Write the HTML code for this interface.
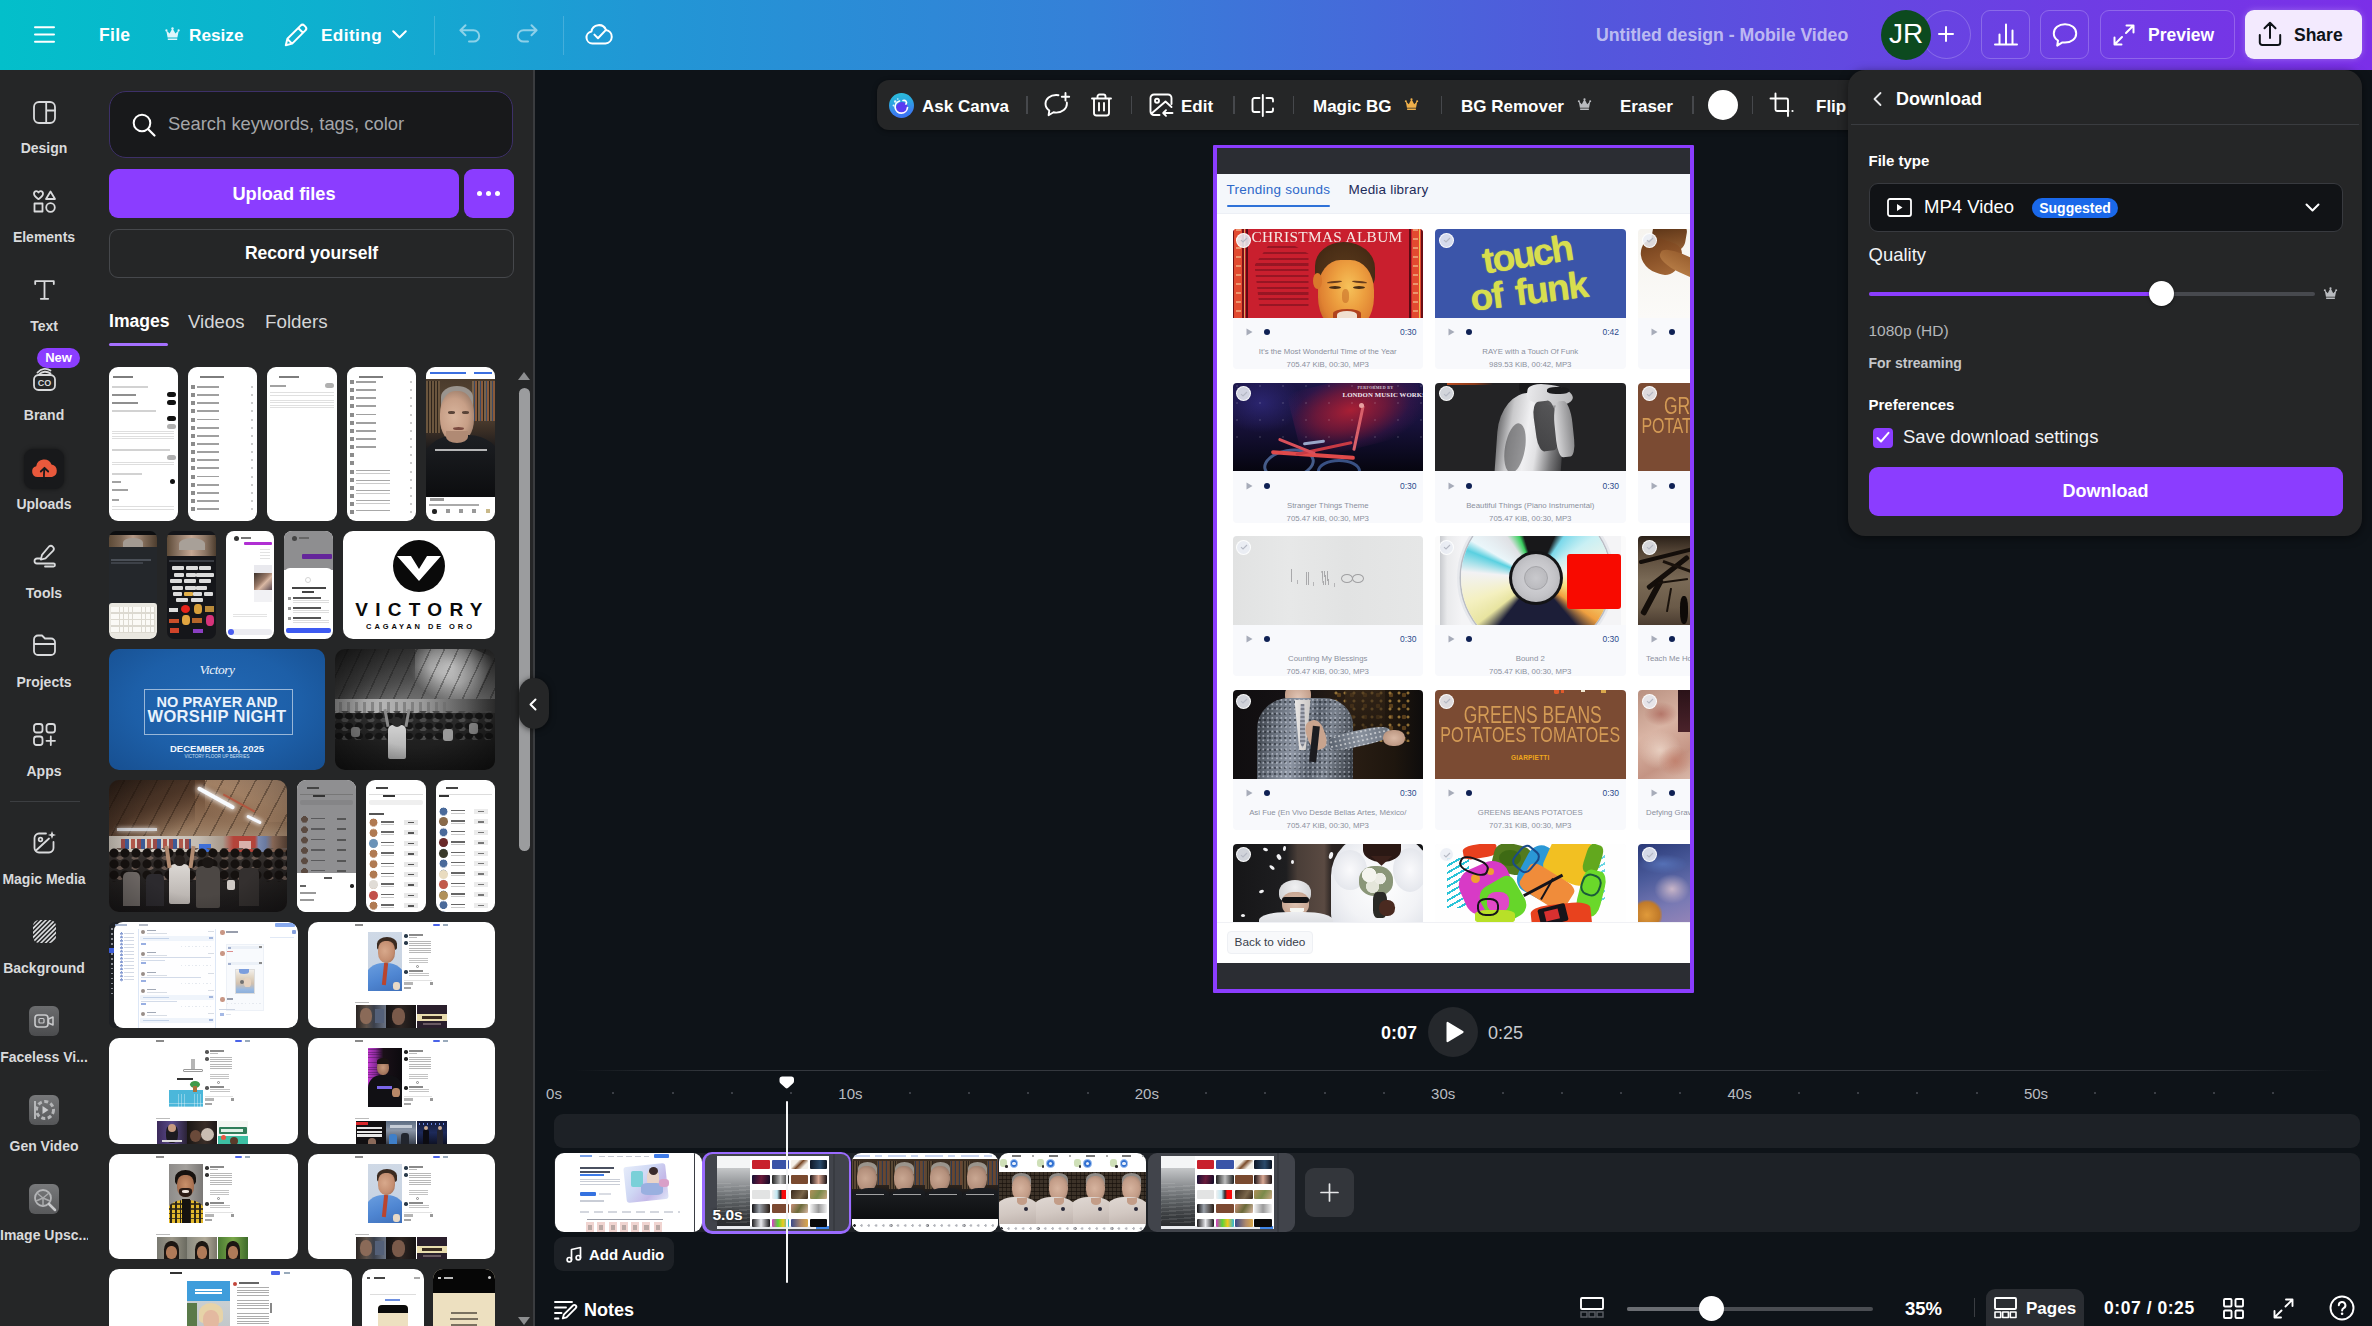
<!DOCTYPE html>
<html>
<head>
<meta charset="utf-8">
<title>Untitled design - Mobile Video</title>
<style>
*{box-sizing:border-box;margin:0;padding:0}
html,body{width:2372px;height:1326px;overflow:hidden;background:#0e1318;font-family:"Liberation Sans",sans-serif;color:#fff}
#root{position:relative;width:2372px;height:1326px;overflow:hidden;background:#0e1318}
#root div,#root svg,#root span{position:absolute}
.t{white-space:nowrap;line-height:1}
.b{font-weight:700}
#topbar{left:0;top:0;width:2372px;height:70px;background:linear-gradient(90deg,#03bfca 0%,#0eb0cf 13.500%,#2197d5 27%,#3580d8 46%,#4669da 58%,#5258dc 66.600%,#6843e2 82%,#7b2fe8 100%)}
.tbtn{top:10px;height:49px;border:1px solid rgba(255,255,255,.22);border-radius:9px}
#side{left:0;top:70px;width:88px;height:1256px;background:#252627}
.sl{left:0;width:88px;text-align:center;margin-top:1px;font-size:14px;font-weight:700;color:#d9dadc;white-space:nowrap;line-height:1}
#panel{left:88px;top:70px;width:447px;height:1256px;background:#252627;border-right:2px solid #3a3c3f}
.th{border-radius:8px;overflow:hidden;background:#fff}
svg{overflow:visible}
.st{fill:none;stroke:#fff;stroke-width:1.7;stroke-linecap:round;stroke-linejoin:round}
.sg{fill:none;stroke:#d9dadc;stroke-width:1.8;stroke-linecap:round;stroke-linejoin:round}
</style>
</head>
<body>
<div id="root">
<div id="topbar">
<!-- hamburger -->
<svg style="left:34px;top:24px" width="21" height="21" viewBox="0 0 21 21"><path class="st" style="stroke-width:2" d="M1 3.3H20M1 10.5H20M1 17.7H20"/></svg>
<div class="t b" style="left:99px;top:27px;font-size:17.500px;letter-spacing:.3px">File</div>
<!-- crown -->
<svg style="left:165px;top:27px" width="15" height="14" viewBox="0 0 15 14"><path fill="#dff6fb" d="M1.2 3.2 4.6 6.6 7.5 1.2 10.4 6.6 13.8 3.2 12.4 10.4H2.6ZM2.8 11.4H12.2V12.9H2.8Z"/><circle cx="7.5" cy="1.4" r="1.2" fill="#dff6fb"/><circle cx="1.4" cy="3.4" r="1.1" fill="#dff6fb"/><circle cx="13.6" cy="3.4" r="1.1" fill="#dff6fb"/></svg>
<div class="t b" style="left:189px;top:27px;font-size:17.200px">Resize</div>
<!-- pencil -->
<svg style="left:284px;top:23px" width="24" height="24" viewBox="0 0 24 24"><path class="st" style="stroke-width:2" d="M16.6 2.6a2.7 2.7 0 0 1 3.8 0l1 1a2.7 2.7 0 0 1 0 3.8L8.2 20.6 1.8 22.2 3.4 15.8ZM14.2 5l4.8 4.8M3.6 16.2l4.2 4.2"/></svg>
<div class="t b" style="left:321px;top:27px;font-size:17.200px;letter-spacing:.4px">Editing</div>
<svg style="left:392px;top:30px" width="15" height="9" viewBox="0 0 15 9"><path class="st" style="stroke-width:2" d="M1.2 1.2 7.5 7.5 13.8 1.2"/></svg>
<div style="left:434px;top:16px;width:1px;height:39px;background:rgba(255,255,255,.18)"></div>
<!-- undo -->
<svg style="left:459px;top:24px;opacity:.5" width="22" height="19" viewBox="0 0 22 19"><path class="st" style="stroke-width:2" d="M6.5 1.2 1.4 6.2 6.5 11.2M1.8 6.2H14.5a5.7 5.7 0 0 1 0 11.4H10"/></svg>
<svg style="left:516px;top:24px;opacity:.5" width="22" height="19" viewBox="0 0 22 19"><path class="st" style="stroke-width:2" d="M15.5 1.2 20.6 6.2 15.5 11.2M20.2 6.2H7.5a5.7 5.7 0 0 0 0 11.4H12"/></svg>
<div style="left:563px;top:16px;width:1px;height:39px;background:rgba(255,255,255,.18)"></div>
<!-- cloud check -->
<svg style="left:585px;top:22px" width="28" height="23" viewBox="0 0 28 23"><path class="st" style="stroke-width:2" d="M7.4 21.5a6 6 0 0 1-1-11.9 7.6 7.6 0 0 1 14.6-1.6 6.8 6.8 0 0 1-.5 13.5ZM9.4 12.6l3.6 3.6 8.2-8.6"/></svg>

<div class="t b" style="left:1596px;top:27px;font-size:17.700px;color:rgba(255,255,255,.62)">Untitled design - Mobile Video</div>
<!-- plus circle -->
<div style="left:1922px;top:10px;width:49px;height:49px;border-radius:50%;border:1px solid rgba(255,255,255,.22)"></div>
<svg style="left:1938px;top:26px" width="16" height="16" viewBox="0 0 16 16"><path class="st" style="stroke-width:2" d="M8 1V15M1 8H15"/></svg>
<!-- avatar -->
<div style="left:1881px;top:10px;width:50px;height:50px;border-radius:50%;background:#0c4a1f"></div>
<div class="t" style="left:1881px;top:20px;width:50px;text-align:center;font-size:28px;color:#fff">JR</div>
<!-- chart -->
<div class="tbtn" style="left:1981px;width:49px"></div>
<svg style="left:1994px;top:23px" width="24" height="23" viewBox="0 0 24 23"><path class="st" style="stroke-width:2" d="M1 21.5H23M5.5 21V11.5M12 21V1.5M18.5 21V7.5"/></svg>
<!-- comment -->
<div class="tbtn" style="left:2040px;width:49px"></div>
<svg style="left:2052px;top:22px" width="26" height="26" viewBox="0 0 26 26"><path class="st" style="stroke-width:2" d="M13 2.2c6.3 0 11.2 4 11.2 9.2S19.3 20.6 13 20.6c-.9 0-1.8-.1-2.6-.2L5.2 23.6l.8-5.1C3.400 16.800 1.800 14.300 1.800 11.400 1.800 6.200 6.700 2.200 13 2.200Z"/></svg>
<!-- preview -->
<div class="tbtn" style="left:2100px;width:135px"></div>
<svg style="left:2113px;top:24px" width="22" height="22" viewBox="0 0 22 22"><path class="st" style="stroke-width:2" d="M13.5 1.500H20.5V8.500M20.200 1.800 13 9M8.500 20.500H1.500V13.500M1.800 20.200 9 13"/></svg>
<div class="t b" style="left:2148px;top:27px;font-size:17.5px">Preview</div>
<!-- share -->
<div style="left:2245px;top:10px;width:117px;height:49px;border-radius:9px;background:#f3eafe;box-shadow:0 0 6px rgba(255,255,255,.25)"></div>
<svg style="left:2258px;top:21px" width="24" height="26" viewBox="0 0 24 26"><path class="st" style="stroke-width:2;stroke:#0e1318" d="M12 17V2M6.500 7.200 12 1.800 17.500 7.200M1.800 14V21.500a2.500 2.500 0 0 0 2.500 2.500H19.700a2.500 2.500 0 0 0 2.500-2.500V14"/></svg>
<div class="t b" style="left:2294px;top:27px;font-size:17.500px;color:#0e1318">Share</div>
</div>
<div id="side">
<!-- Design y label center 147 => rel 77 -->
<svg style="left:33px;top:31px" width="23" height="23" viewBox="0 0 23 23"><rect class="sg" x="1" y="1" width="21" height="21" rx="5"/><path class="sg" d="M13.200 1V22M13.200 9.500H22"/></svg>
<div class="sl" style="top:70px">Design</div>
<!-- Elements label 236 => rel 166 -->
<svg style="left:33px;top:120px" width="23" height="23" viewBox="0 0 23 23"><path class="sg" d="M5.500 9.200C3.500 7.800 1 6 1 3.800 1 2.200 2.200 1.200 3.400 1.200 4.400 1.200 5.100 1.800 5.500 2.500 5.900 1.800 6.600 1.200 7.600 1.200 8.800 1.200 10 2.200 10 3.800 10 6 7.500 7.800 5.500 9.200ZM17.500 1.500 22 9H13ZM1.500 13.500H9.500V21.500H1.500Z"/><circle class="sg" cx="17.500" cy="17.500" r="4.300"/></svg>
<div class="sl" style="top:159px">Elements</div>
<!-- Text label 325 => rel 255 -->
<svg style="left:34px;top:210px" width="21" height="20" viewBox="0 0 21 20"><path class="sg" d="M1.200 4V1.200H19.800V4M10.500 1.200V18.800M6.800 18.800H14.200"/></svg>
<div class="sl" style="top:248px">Text</div>
<!-- Brand label 414 => rel 344 -->
<svg style="left:33px;top:297px" width="23" height="24" viewBox="0 0 23 24"><rect class="sg" x="1" y="8" width="21" height="15" rx="4.500"/><path class="sg" d="M4.500 5.500C8.500 1 14 1 17.500 3.500M6 7.500C9 4 14 4 17.500 6.500"/><text x="11.500" y="19.300" text-anchor="middle" font-family="Liberation Sans" font-weight="700" font-size="9" fill="#d9dadc">CO</text></svg>
<div class="sl" style="top:337px">Brand</div>
<div style="left:37px;top:278px;width:43px;height:20px;border-radius:10px;background:#8b3dff"></div>
<div class="t b" style="left:37px;top:281px;width:43px;text-align:center;font-size:13px;color:#fff">New</div>
<!-- Uploads label 503 => rel 433 -->
<div style="left:24px;top:379px;width:40px;height:40px;border-radius:9px;background:#18191b;box-shadow:0 0 4px rgba(0,0,0,.5)"></div>
<svg style="left:31px;top:386px" width="27" height="26" viewBox="0 0 27 26"><path fill="#e9593c" d="M6.500 21a5.500 5.500 0 0 1-1.300-10.800 8 8 0 0 1 15.300-1.700 6.400 6.400 0 0 1 .5 12.500Z"/><path fill="none" stroke="#18191b" stroke-width="1.800" stroke-linecap="round" stroke-linejoin="round" d="M13.500 24.500C12.500 21 13 16 13.500 12.500M9.800 15.500 13.500 11.800 17.200 15.500"/></svg>
<div class="sl" style="top:426px">Uploads</div>
<!-- Tools label 592 => rel 522 -->
<svg style="left:33px;top:475px" width="23" height="23" viewBox="0 0 23 23"><path class="sg" d="M16 1.500a3 3 0 0 1 4.200 4.200L12.500 13.400 7.800 14.600 9 9.900ZM8 13.500H4a2.500 2.500 0 0 0 0 5H20.500a1.500 1.500 0 0 1 0 3H12"/></svg>
<div class="sl" style="top:515px">Tools</div>
<!-- Projects label 681 => rel 611 -->
<svg style="left:33px;top:564px" width="23" height="22" viewBox="0 0 23 22"><path class="sg" d="M1 5.500a4 4 0 0 1 4-4h4l3 3h6a4 4 0 0 1 4 4V17a4 4 0 0 1-4 4H5a4 4 0 0 1-4-4ZM1 10H22"/></svg>
<div class="sl" style="top:604px">Projects</div>
<!-- Apps label 770 => rel 700 -->
<svg style="left:33px;top:653px" width="23" height="23" viewBox="0 0 23 23"><rect class="sg" x="1" y="1" width="8.500" height="8.500" rx="2.500"/><rect class="sg" x="13.500" y="1" width="8.500" height="8.500" rx="2.500"/><rect class="sg" x="1" y="13.500" width="8.500" height="8.500" rx="2.500"/><path class="sg" d="M17.800 13.500V22M13.500 17.800H22"/></svg>
<div class="sl" style="top:693px">Apps</div>
<div style="left:10px;top:731px;width:70px;height:1px;background:#3c3e41"></div>
<!-- Magic Media label 878 => rel 808 -->
<svg style="left:33px;top:761px" width="23" height="23" viewBox="0 0 23 23"><path class="sg" d="M13 2.500H6a4.500 4.500 0 0 0-4.500 4.500V17a4.500 4.500 0 0 0 4.500 4.500H16a4.500 4.500 0 0 0 4.500-4.500V11M3 19.500 16 7.500"/><circle class="sg" cx="7.500" cy="8.500" r="1.800"/><path fill="#d9dadc" d="M19 0l1.100 2.900L23 4l-2.900 1.100L19 8l-1.100-2.900L15 4l2.900-1.100Z"/></svg>
<div class="sl" style="top:801px">Magic Media</div>
<!-- Background label 967 => rel 897 -->
<svg style="left:33px;top:850px" width="23" height="23" viewBox="0 0 23 23"><defs><clipPath id="bgc"><rect x="0" y="0" width="23" height="23" rx="6"/></clipPath></defs><g clip-path="url(#bgc)" stroke="#d9dadc" stroke-width="1.600"><path d="M-2 6 6-2M-2 10.500 10.500-2M-2 15 15-2M-2 19.500 19.500-2M-2 24 24-2M2.500 24 24 2.500M7 24 24 7M11.500 24 24 11.500M16 24 24 16M20.500 24 24 20.500"/></g></svg>
<div class="sl" style="top:890px">Background</div>
<!-- Faceless label 1056 => rel 986 -->
<div style="left:29px;top:936px;width:30px;height:30px;border-radius:6px;background:linear-gradient(180deg,#6b6c6e,#4b4c4e)"></div>
<svg style="left:34px;top:944px" width="20" height="14" viewBox="0 0 20 14"><rect x="1" y="1" width="13" height="12" rx="3" fill="none" stroke="#c9cacc" stroke-width="1.600"/><path d="M14.500 5 19 3V11L14.500 9Z" fill="none" stroke="#c9cacc" stroke-width="1.500" stroke-linejoin="round"/><rect x="5" y="4.500" width="5" height="4.500" rx="1" fill="none" stroke="#c9cacc" stroke-width="1.200"/></svg>
<div class="sl" style="top:979px">Faceless Vi...</div>
<!-- Gen Video label 1145 => rel 1075 -->
<div style="left:29px;top:1025px;width:30px;height:30px;border-radius:6px;background:linear-gradient(180deg,#77787a,#555658)"></div>
<svg style="left:31px;top:1027px" width="26" height="26" viewBox="0 0 26 26"><circle cx="14" cy="13" r="8.500" fill="none" stroke="#b5b6b8" stroke-width="3" stroke-dasharray="4 2.500"/><path d="M11.500 9 17.500 13 11.500 17Z" fill="#c9cacc"/><path d="M4 4V22" stroke="#b5b6b8" stroke-width="2"/></svg>
<div class="sl" style="top:1068px">Gen Video</div>
<!-- Image Upsc label 1234 => rel 1164 -->
<div style="left:29px;top:1114px;width:30px;height:30px;border-radius:6px;background:linear-gradient(180deg,#78797b,#58595b)"></div>
<svg style="left:31px;top:1116px" width="26" height="26" viewBox="0 0 26 26"><circle cx="12" cy="12" r="8" fill="none" stroke="#b5b6b8" stroke-width="1.800"/><path d="M12 12 6 7M12 12 18 7M12 12 12 20M12 12 5 15M12 12 19 15" stroke="#a9aaac" stroke-width="1.500"/><path d="M18 18 24 24" stroke="#c9cacc" stroke-width="2.500" stroke-linecap="round"/></svg>
<div class="sl" style="top:1157px">Image Upsc...</div>
</div>
<div id="panel">
<!-- search: abs x109..513,y91..158 => rel x21,y21 -->
<div style="left:21px;top:21px;width:404px;height:67px;border-radius:17px;background:#18191b;border:1.500px solid #3d3068"></div>
<svg style="left:44px;top:43px" width="24" height="24" viewBox="0 0 24 24"><circle class="st" style="stroke-width:2" cx="10" cy="10" r="8.300"/><path class="st" style="stroke-width:2.200" d="M16.200 16.200 22.500 22.500"/></svg>
<div class="t" style="left:80px;top:45px;font-size:18.400px;color:#a4a6a9">Search keywords, tags, color</div>
<!-- upload -->
<div style="left:21px;top:99px;width:350px;height:49px;border-radius:9px;background:#8b3dff"></div>
<div class="t b" style="left:21px;top:115px;width:350px;text-align:center;font-size:18.200px">Upload files</div>
<div style="left:376px;top:99px;width:50px;height:49px;border-radius:9px;background:#8b3dff"></div>
<div style="left:389px;top:121px;width:5px;height:5px;border-radius:50%;background:#fff;box-shadow:9px 0 0 #fff,18px 0 0 #fff"></div>
<!-- record -->
<div style="left:21px;top:159px;width:405px;height:49px;border-radius:9px;border:1px solid #46484c;background:#252627"></div>
<div class="t b" style="left:21px;top:175px;width:405px;text-align:center;font-size:17.500px">Record yourself</div>
<!-- tabs -->
<div class="t b" style="left:21px;top:243px;font-size:17.600px">Images</div>
<div class="t" style="left:100px;top:243px;font-size:18.600px;color:#d5d6d8">Videos</div>
<div class="t" style="left:177px;top:243px;font-size:18.800px;color:#d5d6d8">Folders</div>
<div style="left:21px;top:273px;width:59px;height:3px;border-radius:2px;background:#a570ff"></div>
<!-- scrollbar -->
<svg style="left:430px;top:301px" width="12" height="9" viewBox="0 0 12 9"><path d="M0 9 6 1 12 9Z" fill="#8d8e90"/></svg>
<div style="left:431px;top:318px;width:11px;height:463px;border-radius:6px;background:#9b9c9e"></div>
<svg style="left:430px;top:1247px" width="12" height="9" viewBox="0 0 12 9"><path d="M0 0 6 8 12 0Z" fill="#8d8e90"/></svg>
<!--THUMBS-->
</div>
<!-- collapse handle -->
<div style="left:519px;top:678px;width:30px;height:51px;border-radius:15px;background:#252627;box-shadow:0 1px 6px rgba(0,0,0,.6)"></div>
<svg style="left:529px;top:698px" width="8" height="13" viewBox="0 0 8 13"><path class="st" style="stroke-width:2" d="M6.500 1.500 1.500 6.500 6.500 11.500"/></svg>
<!-- ROW 1: y367..521 -->
<div class="th" style="left:109px;top:367px;width:69px;height:154px;border-radius:9px;"><div style="left:0;top:0;width:70px;height:154px;filter:blur(.35px)">
 <div style="left:4px;top:9px;width:20px;height:2px;background:#7d7d7d"></div>
 <div style="left:3px;top:19px;width:36px;height:1.500px;background:#d2d2d2"></div>
 <div style="left:3px;top:27px;width:24px;height:2px;background:#8f8f8f"></div>
 <div style="left:3px;top:35px;width:26px;height:2px;background:#8f8f8f"></div>
 <div style="left:58px;top:25px;width:9px;height:5px;border-radius:3px;background:#111"></div>
 <div style="left:58px;top:33px;width:9px;height:5px;border-radius:3px;background:#111"></div>
 <div style="left:3px;top:43px;width:44px;height:1.500px;background:#d2d2d2"></div>
 <div style="left:58px;top:49px;width:9px;height:5px;border-radius:3px;background:#111"></div>
 <div style="left:58px;top:57px;width:9px;height:5px;border-radius:3px;background:#b0b0b0"></div>
 <div style="left:3px;top:64px;width:62px;height:10px;background:repeating-linear-gradient(180deg,#dedede 0 1px,#fff 1px 2.500px)"></div>
 <div style="left:3px;top:82px;width:58px;height:1.500px;background:#d2d2d2"></div>
 <div style="left:58px;top:88px;width:9px;height:5px;border-radius:3px;background:#b0b0b0"></div>
 <div style="left:3px;top:95px;width:62px;height:4px;background:repeating-linear-gradient(180deg,#dedede 0 1px,#fff 1px 2.500px)"></div>
 <div style="left:3px;top:106px;width:30px;height:1.500px;background:#d2d2d2"></div>
 <div style="left:61px;top:112px;width:5px;height:5px;border-radius:50%;background:#111"></div>
 <div style="left:3px;top:114px;width:9px;height:1.500px;background:#a2a2a2"></div>
 <div style="left:3px;top:122px;width:16px;height:1.500px;background:#a2a2a2"></div>
 <div style="left:3px;top:132px;width:7px;height:1.500px;background:#a2a2a2"></div>
 <div style="left:3px;top:139px;width:62px;height:4px;background:repeating-linear-gradient(180deg,#dedede 0 1px,#fff 1px 2.500px)"></div>
</div></div>
<div class="th" style="left:188px;top:367px;width:69px;height:154px;border-radius:9px;"><div style="left:0;top:0;width:70px;height:154px;filter:blur(.35px)">
 <div style="left:12px;top:9px;width:24px;height:2px;background:#7d7d7d"></div>
 <div style="left:3px;top:18px;width:4px;height:128px;background:repeating-linear-gradient(180deg,#8c8c8c 0 4px,#fff 4px 8.150px)"></div>
 <div style="left:9px;top:19px;width:22px;height:128px;background:repeating-linear-gradient(180deg,#a0a0a0 0 1.800px,#fff 1.800px 8.150px)"></div>
 <div style="left:63px;top:19px;width:2px;height:128px;background:repeating-linear-gradient(180deg,#ccc 0 2px,#fff 2px 8.150px)"></div>
</div></div>
<div class="th" style="left:267px;top:367px;width:70px;height:154px;border-radius:9px;"><div style="left:0;top:0;width:70px;height:154px;filter:blur(.35px)">
 <div style="left:12px;top:9px;width:20px;height:2px;background:#7d7d7d"></div>
 <div style="left:3px;top:18px;width:16px;height:2px;background:#a2a2a2"></div>
 <div style="left:58px;top:16px;width:9px;height:5px;border-radius:3px;background:#b0b0b0"></div>
 <div style="left:3px;top:25px;width:64px;height:4px;background:repeating-linear-gradient(180deg,#e0e0e0 0 1px,#fff 1px 2.500px)"></div>
 <div style="left:3px;top:33px;width:64px;height:8px;background:repeating-linear-gradient(180deg,#e0e0e0 0 1px,#fff 1px 2.500px)"></div>
</div></div>
<div class="th" style="left:347px;top:367px;width:69px;height:154px;border-radius:9px;"><div style="left:0;top:0;width:70px;height:154px;filter:blur(.35px)">
 <div style="left:12px;top:9px;width:24px;height:2px;background:#7d7d7d"></div>
 <div style="left:3px;top:13px;width:4px;height:134px;background:repeating-linear-gradient(180deg,#8c8c8c 0 4px,#fff 4px 8.150px)"></div>
 <div style="left:9px;top:14px;width:20px;height:70px;background:repeating-linear-gradient(180deg,#a0a0a0 0 1.800px,#fff 1.800px 8.150px)"></div>
 <div style="left:9px;top:103px;width:34px;height:44px;background:repeating-linear-gradient(180deg,#a8a8a8 0 1.500px,#fff 1.500px 3.500px,#ccc 3.500px 4.500px,#fff 4.500px 10px)"></div>
 <div style="left:63px;top:14px;width:2px;height:134px;background:repeating-linear-gradient(180deg,#ccc 0 2px,#fff 2px 8.150px)"></div>
</div></div>
<div class="th" style="left:426px;top:367px;width:69px;height:154px;border-radius:9px">
 <div style="left:4px;top:5px;width:36px;height:1.500px;background:#3b6fe0"></div><div style="left:48px;top:5px;width:18px;height:1.500px;background:#3b6fe0"></div>
 <div style="left:0;top:12px;width:69px;height:116px;background:linear-gradient(180deg,#4a3b2c 0%,#5b4836 25%,#3a2e25 45%,#17181b 62%,#0e0f11 100%)"></div>
 <div style="left:0;top:14px;width:14px;height:52px;background:repeating-linear-gradient(90deg,#6b563e 0 2px,#2d241c 2px 3px)"></div>
 <div style="left:46px;top:14px;width:23px;height:40px;background:repeating-linear-gradient(90deg,#7a6249 0 2px,#3a4a66 2px 3px,#8a5a3a 3px 5px,#2d241c 5px 6px)"></div>
 <div style="left:15px;top:19px;width:32px;height:22px;border-radius:50% 50% 0 0;background:#9a948e"></div>
 <div style="left:14px;top:24px;width:34px;height:52px;border-radius:44% 44% 46% 46%;background:radial-gradient(ellipse at 42% 50%,#d9b59d 0%,#c79f87 50%,#9a7b68 82%,#6a574c 100%)"></div>
 <div style="left:22px;top:44px;width:7px;height:2.500px;border-radius:50%;background:#5a4438"></div><div style="left:36px;top:44px;width:7px;height:2.500px;border-radius:50%;background:#5a4438"></div><div style="left:27px;top:60px;width:11px;height:3px;border-radius:50%;background:#7a4a40"></div>
 <div style="left:-4px;top:68px;width:78px;height:62px;border-radius:45% 40% 0 0;background:linear-gradient(180deg,#1d1f23,#0c0d0f)"></div>
 <div style="left:20px;top:64px;width:22px;height:12px;border-radius:0 0 50% 50%;background:#b08a74"></div>
 <div style="left:9px;top:82px;width:52px;height:1.500px;background:#ddd;opacity:.8"></div>
 <div style="left:4px;top:131px;width:14px;height:3px;background:#999"></div>
 <div style="left:3px;top:137px;width:50px;height:1.500px;background:#aaa"></div>
 <div style="left:6px;top:142px;width:5px;height:5px;border-radius:2px;background:#222"></div>
 <div style="left:20px;top:142px;width:4px;height:4px;background:#999"></div><div style="left:33px;top:142px;width:4px;height:4px;background:#999"></div><div style="left:46px;top:142px;width:4px;height:4px;background:#999"></div><div style="left:60px;top:142px;width:4px;height:4px;background:#c9b98a"></div>
</div>

<!-- ROW 2: y531..639 -->
<div class="th" style="left:109px;top:531px;width:48px;height:108px;border-radius:7px;background:#24272b">
 <div style="left:0;top:0;width:48px;height:4px;background:#0d0e10"></div>
 <div style="left:0;top:4px;width:48px;height:12px;background:linear-gradient(90deg,#5d4a37 0%,#7b6654 25%,#b59a88 50%,#7b6654 75%,#4d3d2e 100%)"></div>
 <div style="left:14px;top:7px;width:20px;height:9px;border-radius:50% 50% 0 0;background:#a39a92"></div>
 <div style="left:2px;top:28px;width:40px;height:1.500px;background:#4a4f57"></div>
 <div style="left:2px;top:31px;width:32px;height:1.500px;background:#3d4148"></div>
 <div style="left:0;top:72px;width:48px;height:36px;border-radius:3px 3px 7px 7px;background:#e9e7e0"></div>
 <div style="left:2px;top:76px;width:44px;height:26px;background:repeating-linear-gradient(180deg,#fbfaf6 0 5px,#dcd9d0 5px 6.500px)"></div>
 <div style="left:2px;top:76px;width:44px;height:26px;background:repeating-linear-gradient(90deg,transparent 0 3.600px,#dcd9d0 3.600px 4.400px)"></div>
</div>
<div class="th" style="left:167px;top:531px;width:49px;height:108px;border-radius:7px;background:#15161a">
 <div style="left:0;top:4px;width:49px;height:21px;background:linear-gradient(90deg,#5d4a37 0%,#8b7564 22%,#c5a793 50%,#8b7564 78%,#4d3d2e 100%)"></div>
 <div style="left:12px;top:7px;width:26px;height:12px;border-radius:50% 50% 0 0;background:#a8a098"></div>
 <div style="left:2px;top:29px;width:45px;height:2px;background:#3a3d44"></div>
 <div style="left:5px;top:35px;width:12px;height:4px;border-radius:1px;background:#dcdcdc;box-shadow:14px 0 0 #dcdcdc,27px 0 0 #dcdcdc"></div>
 <div style="left:7px;top:41.500px;width:10px;height:4px;border-radius:1px;background:#dcdcdc;box-shadow:12px 0 0 #dcdcdc,22px 0 0 #dcdcdc,30px 0 0 #dcdcdc"></div>
 <div style="left:3px;top:48px;width:12px;height:4px;border-radius:1px;background:#dcdcdc;box-shadow:14px 0 0 #dcdcdc,29px 0 0 #dcdcdc"></div>
 <div style="left:5px;top:54.500px;width:11px;height:4px;border-radius:1px;background:#dcdcdc;box-shadow:13px 0 0 #dcdcdc,24px 0 0 #dcdcdc"></div>
 <div style="left:6px;top:61px;width:9px;height:4px;border-radius:1px;background:#dcdcdc;box-shadow:11px 0 0 #e2b04a,20px 0 0 #dcdcdc,31px 0 0 #dcdcdc"></div>
 <div style="left:9px;top:67px;width:12px;height:4px;border-radius:1px;background:#dcdcdc;box-shadow:15px 0 0 #dcdcdc"></div>
 <div style="left:2px;top:77px;width:9px;height:4px;background:#ddd"></div>
 <div style="left:14px;top:74px;width:9px;height:8px;border-radius:50%;background:#e5231b"></div>
 <div style="left:27px;top:73px;width:8px;height:10px;border-radius:40%;background:#d8a03a"></div>
 <div style="left:38px;top:75px;width:9px;height:6px;background:#b98a3a"></div>
 <div style="left:2px;top:88px;width:10px;height:4px;background:#c94f2a"></div>
 <div style="left:15px;top:84px;width:8px;height:10px;border-radius:40%;background:#e0a440"></div>
 <div style="left:25px;top:87px;width:10px;height:5px;background:#b5652a"></div>
 <div style="left:39px;top:84px;width:8px;height:11px;border-radius:40%;background:#d6337a"></div>
 <div style="left:3px;top:97px;width:9px;height:5px;background:#d0442a"></div>
 <div style="left:26px;top:98px;width:10px;height:4px;background:#8b3fc2"></div>
</div>
<div class="th" style="left:226px;top:531px;width:48px;height:108px;border-radius:8px">
 <div style="left:8px;top:5px;width:5px;height:5px;border-radius:50%;background:#333"></div><div style="left:15px;top:6px;width:10px;height:2px;background:#777"></div>
 <div style="left:18px;top:11px;width:28px;height:3px;border-radius:1px;background:#b02fd3"></div>
 <div style="left:34px;top:18px;width:10px;height:10px;background:repeating-linear-gradient(180deg,#e2e2e2 0 1px,#fff 1px 3px)"></div>
 <div style="left:28px;top:34px;width:18px;height:10px;background:#e9e9ee"></div>
 <div style="left:28px;top:42px;width:18px;height:17px;background:linear-gradient(135deg,#3a302a 0%,#9a7a68 45%,#d9b8a3 60%,#5a4a52 100%)"></div>
 <div style="left:28px;top:59px;width:18px;height:12px;background:#f1f1f4"></div>
 <div style="left:7px;top:83px;width:34px;height:4px;background:repeating-linear-gradient(180deg,#e4e4e4 0 1px,#fff 1px 2px)"></div>
 <div style="left:2px;top:98px;width:44px;height:6px;border-radius:3px;background:#ececf1"></div>
 <div style="left:2px;top:98px;width:6px;height:6px;border-radius:50%;background:#4a5df0"></div>
</div>
<div class="th" style="left:284px;top:531px;width:49px;height:108px;border-radius:8px">
 <div style="left:0;top:0;width:49px;height:39px;background:#8e8e90"></div>
 <div style="left:8px;top:5px;width:5px;height:5px;border-radius:50%;background:#444"></div><div style="left:15px;top:6px;width:10px;height:2px;background:#666"></div>
 <div style="left:18px;top:23px;width:30px;height:4.500px;border-radius:1px;background:#64259a"></div>
 <div style="left:0;top:37px;width:49px;height:10px;border-radius:6px 6px 0 0;background:#fff"></div>
 <div style="left:21px;top:46px;width:6px;height:6px;border-radius:50%;border:1px solid #d5d5d5"></div>
 <div style="left:8px;top:56px;width:34px;height:2px;background:#444"></div><div style="left:18px;top:60px;width:12px;height:2px;background:#444"></div>
 <div style="left:4px;top:66px;width:3px;height:3px;background:#999;box-shadow:0 10px 0 #999,0 20px 0 #999"></div>
 <div style="left:9px;top:66px;width:28px;height:1.500px;background:#555;box-shadow:0 10px 0 #555,0 20px 0 #555"></div>
 <div style="left:9px;top:69px;width:36px;height:4px;background:repeating-linear-gradient(180deg,#ddd 0 1px,#fff 1px 2px)"></div>
 <div style="left:9px;top:79px;width:36px;height:4px;background:repeating-linear-gradient(180deg,#ddd 0 1px,#fff 1px 2px)"></div>
 <div style="left:9px;top:89px;width:36px;height:4px;background:repeating-linear-gradient(180deg,#ddd 0 1px,#fff 1px 2px)"></div>
 <div style="left:2px;top:97px;width:45px;height:5px;border-radius:2px;background:#3d5af1"></div>
</div>
<div class="th" style="left:343px;top:531px;width:152px;height:108px;border-radius:10px">
 <div style="left:50px;top:9px;width:52px;height:52px;border-radius:50%;background:#0a0a0a"></div>
 <svg style="left:54px;top:25px" width="44" height="26" viewBox="0 0 44 26"><path d="M0 0H14L22 13 30 0H44L22 25Z" fill="#fff"/></svg>
 <div class="t b" style="left:0;top:69px;width:152px;text-align:center;font-size:19px;letter-spacing:7.300px;color:#0a0a0a;text-indent:7px">VICTORY</div>
 <div class="t b" style="left:0;top:92px;width:152px;text-align:center;font-size:7.500px;letter-spacing:2.900px;color:#0a0a0a;text-indent:3px">CAGAYAN DE ORO</div>
</div>
<!-- ROW 3: y649..770 -->
<div class="th" style="left:109px;top:649px;width:216px;height:121px;border-radius:10px;background:radial-gradient(ellipse at 50% 45%,#2268b4 0%,#1d5fa8 55%,#174f90 100%)">
 <div class="t" style="left:0;top:14px;width:216px;text-align:center;font-family:'Liberation Serif',serif;font-style:italic;font-size:13.500px;color:#eaf2fb;letter-spacing:-.5px">Victory</div>
 <div style="left:35px;top:40px;width:149px;height:46px;border:1px solid rgba(255,255,255,.55)"></div>
 <div class="t b" style="left:0;top:46px;width:216px;text-align:center;font-size:14.500px;letter-spacing:.1px;color:#e9f2fc">NO PRAYER AND</div>
 <div class="t b" style="left:0;top:59px;width:216px;text-align:center;font-size:16.500px;letter-spacing:.35px;color:#e9f2fc">WORSHIP NIGHT</div>
 <div class="t b" style="left:0;top:95px;width:216px;text-align:center;font-size:9.500px;color:#f2f7fd">DECEMBER 16, 2025</div>
 <div class="t" style="left:0;top:106px;width:216px;text-align:center;font-size:4.500px;color:#cfe0f3">VICTORY FLOOR UP BERRIES</div>
</div>
<div class="th" style="left:335px;top:649px;width:160px;height:121px;border-radius:10px;background:#2a2a2a">
 <div style="left:0;top:0;width:160px;height:121px;filter:blur(.7px)">
 <div style="left:0;top:0;width:160px;height:70px;background:linear-gradient(180deg,#3c3c3c 0%,#565656 40%,#6e6e6e 75%,#8a8a8a 100%)"></div>
 <div style="left:70px;top:-10px;width:80px;height:60px;background:radial-gradient(ellipse at 55% 40%,#d4d4d4 0%,#a8a8a8 35%,rgba(120,120,120,0) 72%);transform:rotate(24deg)"></div>
 <div style="left:0;top:0;width:80px;height:56px;background:linear-gradient(150deg,#242424 0%,#3a3a3a 45%,rgba(80,80,80,0) 85%)"></div>
 <div style="left:0;top:0;width:160px;height:60px;background:repeating-linear-gradient(115deg,transparent 0 11px,rgba(20,20,20,.35) 11px 12.500px)"></div>
 <div style="left:0;top:50px;width:160px;height:18px;background:linear-gradient(90deg,#8e8e8e 0%,#b4b4b4 30%,#9a9a9a 55%,#5e5e5e 80%,#3a3a3a 100%)"></div>
 <div style="left:4px;top:53px;width:110px;height:11px;background:repeating-linear-gradient(90deg,#6a6a6a 0 3px,transparent 3px 8px);opacity:.6"></div>
 <div style="left:0;top:64px;width:160px;height:57px;background:linear-gradient(180deg,#2e2e2e 0%,#222 40%,#191919 100%)"></div>
 <div style="left:0;top:62px;width:160px;height:30px;background:radial-gradient(ellipse at 4px 5px,#151515 0 3.500px,transparent 4.500px) 0 0/10px 10px,radial-gradient(ellipse at 5px 4px,#4a4a4a 0 3px,transparent 4px) 5px 5px/13px 9px"></div>
 <div style="left:53px;top:76px;width:18px;height:34px;border-radius:5px 5px 2px 2px;background:linear-gradient(180deg,#d2d2d2,#a8a8a8)"></div>
 <div style="left:57px;top:68px;width:10px;height:10px;border-radius:50%;background:#2c2c2c"></div>
 <div style="left:50px;top:60px;width:3px;height:18px;background:#8a8a8a;transform:rotate(-10deg)"></div><div style="left:71px;top:60px;width:3px;height:18px;background:#8a8a8a;transform:rotate(10deg)"></div>
 <div style="left:108px;top:80px;width:10px;height:12px;border-radius:3px;background:#9a9a9a"></div><div style="left:16px;top:78px;width:9px;height:10px;border-radius:3px;background:#7a7a7a"></div><div style="left:134px;top:74px;width:9px;height:11px;border-radius:3px;background:#8a8a8a"></div>
 <div style="left:0;top:0;width:160px;height:121px;background:radial-gradient(ellipse at 50% 48%,rgba(0,0,0,0) 45%,rgba(0,0,0,.55) 100%)"></div>
 </div>
</div>

<!-- ROW 4: y780..912 -->
<div class="th" style="left:109px;top:780px;width:178px;height:132px;border-radius:10px;background:#2a2624">
 <div style="left:0;top:0;width:178px;height:132px;filter:blur(.7px)">
 <div style="left:0;top:0;width:178px;height:64px;background:linear-gradient(180deg,#5a3e2c 0%,#7a5a42 35%,#93745a 70%,#a89078 100%)"></div>
 <div style="left:0;top:0;width:86px;height:60px;background:linear-gradient(150deg,#2e2018 0%,#4a3426 45%,rgba(110,85,65,0) 85%)"></div>
 <div style="left:96px;top:-4px;width:90px;height:46px;background:linear-gradient(200deg,#b8957a 0%,#a07f63 50%,rgba(150,120,95,0) 90%)"></div>
 <div style="left:0;top:0;width:178px;height:58px;background:repeating-linear-gradient(118deg,transparent 0 13px,rgba(30,18,10,.35) 13px 14.500px)"></div>
 <div style="left:86px;top:16px;width:42px;height:4px;border-radius:2px;background:#f8fbff;transform:rotate(29deg);box-shadow:0 0 5px 1px rgba(255,255,255,.85)"></div>
 <div style="left:137px;top:38px;width:16px;height:3px;border-radius:2px;background:#f4f8ff;transform:rotate(27deg);box-shadow:0 0 4px 1px rgba(255,255,255,.8)"></div>
 <div style="left:112px;top:22px;width:36px;height:2px;background:#b9503a;transform:rotate(29deg);opacity:.8"></div>
 <div style="left:8px;top:48px;width:40px;height:3px;background:#e8eef6;box-shadow:0 0 4px #fff;opacity:.8"></div>
 <div style="left:0;top:56px;width:178px;height:18px;background:linear-gradient(90deg,#bdb6ac 0%,#d2ccc4 25%,#c4bcb2 50%,#a89a8c 64%,#b4443a 70%,#b4443a 82%,#7a8ab0 84%,#6a7aa0 88%,#8a6a58 92%,#5a4436 100%)"></div>
 <div style="left:12px;top:59px;width:70px;height:10px;background:repeating-linear-gradient(90deg,#9a4a48 0 4px,#3d5a96 4px 8px,#d8d2c8 8px 10px,#b0584a 10px 14px,#d8d2c8 14px 16px)"></div>
 <div style="left:90px;top:64px;width:12px;height:8px;background:#3f6fd6"></div><div style="left:130px;top:61px;width:12px;height:8px;background:#e8e0dc;opacity:.7"></div>
 <div style="left:0;top:72px;width:178px;height:60px;background:linear-gradient(180deg,#3a3431 0%,#262322 35%,#1a1819 100%)"></div>
 <div style="left:0;top:68px;width:178px;height:34px;background:radial-gradient(ellipse at 5px 5px,#15110f 0 4px,transparent 5px) 0 0/11px 11px,radial-gradient(ellipse at 5px 5px,#6a5a52 0 3px,transparent 4px) 6px 5px/15px 10px"></div>
 <div style="left:60px;top:84px;width:21px;height:40px;border-radius:6px 6px 2px 2px;background:linear-gradient(180deg,#dcd8d4,#b4aeaa)"></div>
 <div style="left:65px;top:75px;width:11px;height:11px;border-radius:50%;background:#241e1b"></div>
 <div style="left:57px;top:66px;width:3.500px;height:22px;background:#b08a70;transform:rotate(-8deg)"></div><div style="left:81px;top:66px;width:3.500px;height:22px;background:#b08a70;transform:rotate(8deg)"></div>
 <div style="left:87px;top:86px;width:24px;height:42px;border-radius:6px 6px 2px 2px;background:#4c4744"></div><div style="left:93px;top:77px;width:12px;height:11px;border-radius:50%;background:#1a1614"></div>
 <div style="left:14px;top:92px;width:17px;height:34px;border-radius:5px 5px 0 0;background:#6f6966"></div><div style="left:37px;top:94px;width:18px;height:32px;border-radius:5px 5px 0 0;background:#2c2a2e"></div>
 <div style="left:118px;top:100px;width:8px;height:10px;border-radius:2px;background:#cfcac6"></div><div style="left:130px;top:88px;width:20px;height:38px;border-radius:5px 5px 0 0;background:#34302f"></div>
 <div style="left:0;top:0;width:178px;height:132px;background:radial-gradient(ellipse at 50% 45%,rgba(0,0,0,0) 55%,rgba(0,0,0,.35) 100%)"></div>
 </div>
</div>
<div class="th" style="left:297px;top:780px;width:59px;height:132px;border-radius:9px">
 <div style="left:0;top:0;width:59px;height:93px;background:#8f8f91"></div>
 <div style="left:10px;top:7px;width:12px;height:2px;background:#444"></div>
 <div style="left:3px;top:14px;width:53px;height:1px;background:#777"></div><div style="left:16px;top:15px;width:12px;height:1.500px;background:#333"></div>
 <div style="left:3px;top:20px;width:53px;height:5px;border-radius:2px;background:#858587"></div>
 <div style="left:4px;top:36px;width:7px;height:66px;background:radial-gradient(circle at 3.500px 3.500px,#5a4a40 0 3.200px,transparent 3.500px) 0 0/7px 10.400px"></div>
 <div style="left:14px;top:38px;width:14px;height:62px;background:repeating-linear-gradient(180deg,#5a5a5c 0 1.500px,transparent 1.500px 10.400px)"></div>
 <div style="left:40px;top:38px;width:9px;height:62px;background:repeating-linear-gradient(180deg,#555 0 2px,transparent 2px 10.400px)"></div>
 <div style="left:0;top:93px;width:59px;height:39px;border-radius:5px 5px 0 0;background:#fff"></div>
 <div style="left:27px;top:97px;width:8px;height:1.500px;background:#555"></div>
 <div style="left:3px;top:105px;width:6px;height:1.500px;background:#666"></div><div style="left:53px;top:104px;width:3.500px;height:3.500px;border-radius:50%;background:#222"></div>
 <div style="left:3px;top:112px;width:16px;height:1.500px;background:#999"></div><div style="left:3px;top:119px;width:14px;height:1.500px;background:#999"></div>
</div>
<div class="th" style="left:366px;top:780px;width:60px;height:132px;border-radius:9px">
 <div style="left:10px;top:7px;width:12px;height:2px;background:#444"></div>
 <div style="left:3px;top:14px;width:54px;height:1px;background:#ddd"></div><div style="left:17px;top:15px;width:12px;height:1.500px;background:#333"></div>
 <div style="left:3px;top:20px;width:54px;height:5px;border-radius:2px;background:#efefef"></div>
 <div style="left:3px;top:33px;width:15px;height:1.500px;background:#555"></div>
 <div style="left:3px;top:38px;width:9px;height:94px;background:radial-gradient(circle at 4.500px 4.500px,#b07a52 0 3.800px,transparent 4.200px) 0 0/9px 10.400px"></div>
 <div style="left:3px;top:59px;width:9px;height:9px;border-radius:50%;background:#6a93b8"></div><div style="left:3px;top:100px;width:9px;height:9px;border-radius:50%;background:#e0dcd6"></div><div style="left:3px;top:111px;width:9px;height:9px;border-radius:50%;background:#c2504a"></div>
 <div style="left:15px;top:41px;width:13px;height:90px;background:repeating-linear-gradient(180deg,#666 0 1.500px,transparent 1.500px 3px,#ccc 3px 4px,transparent 4px 10.400px)"></div>
 <div style="left:38px;top:40px;width:14px;height:90px;background:repeating-linear-gradient(180deg,#e9e9e9 0 5px,transparent 5px 10.400px)"></div>
 <div style="left:42px;top:42px;width:6px;height:90px;background:repeating-linear-gradient(180deg,#555 0 1.500px,transparent 1.500px 10.400px)"></div>
</div>
<div class="th" style="left:436px;top:780px;width:59px;height:132px;border-radius:9px">
 <div style="left:10px;top:7px;width:12px;height:2px;background:#444"></div>
 <div style="left:3px;top:14px;width:53px;height:1px;background:#ddd"></div><div style="left:3px;top:15px;width:10px;height:1.500px;background:#333"></div>
 <div style="left:3px;top:27px;width:9px;height:105px;background:radial-gradient(circle at 4.500px 4.500px,#4a6a9a 0 3.800px,transparent 4.200px) 0 0/9px 10.400px"></div>
 <div style="left:3px;top:37px;width:9px;height:9px;border-radius:50%;background:#8a6a4a"></div><div style="left:3px;top:58px;width:9px;height:9px;border-radius:50%;background:#6a2a2a"></div><div style="left:3px;top:69px;width:9px;height:9px;border-radius:50%;background:#3a3a2a"></div><div style="left:3px;top:90px;width:9px;height:9px;border-radius:50%;background:#e9dcc0"></div><div style="left:3px;top:100px;width:9px;height:9px;border-radius:50%;background:#c25a4a"></div><div style="left:3px;top:111px;width:9px;height:9px;border-radius:50%;background:#b0905a"></div>
 <div style="left:15px;top:30px;width:14px;height:100px;background:repeating-linear-gradient(180deg,#666 0 1.500px,transparent 1.500px 3px,#ccc 3px 4px,transparent 4px 10.400px)"></div>
 <div style="left:38px;top:29px;width:14px;height:100px;background:repeating-linear-gradient(180deg,#ececec 0 5px,transparent 5px 10.400px)"></div>
 <div style="left:42px;top:31px;width:6px;height:100px;background:repeating-linear-gradient(180deg,#777 0 1.500px,transparent 1.500px 10.400px)"></div>
</div>
<!-- ROW 5 -->
<div class="th" style="left:109px;top:922px;width:189px;height:106px;border-radius:6px 10px 10px 6px;background:#1d1f23"><div style="left:4.500px;top:0;width:184.500px;height:106px;border-radius:9px;background:#fff"></div><div style="left:1.500px;top:6px;width:2px;height:70px;background:repeating-linear-gradient(180deg,#8a8d94 0 1.500px,transparent 1.500px 5px)"></div><div style="left:0;top:26px;width:4.500px;height:5px;background:#3b5bd6"></div><div style="left:6px;top:2px;width:12px;height:1.500px;background:#7a8fb5"></div><div style="left:30px;top:2px;width:9px;height:1.500px;background:#8a93a5"></div><div style="left:166px;top:1px;width:20px;height:4px;border-radius:1px;background:#3f77e6"></div><div style="left:11px;top:10px;width:3px;height:50px;background:radial-gradient(circle at 1.500px 1.500px,#3d5fb8 0 1.200px,transparent 1.400px) 0 0/3px 3.550px"></div><div style="left:15px;top:10.500px;width:10px;height:49px;background:repeating-linear-gradient(180deg,#b8c2d6 0 1px,transparent 1px 3.550px)"></div><div style="left:29px;top:7px;width:78px;height:99px;border-left:1px solid #c9d9f0;border-right:1px solid #c9d9f0;background:#fdfeff"></div><div style="left:32px;top:8px;width:4px;height:4px;border-radius:50%;background:#5a4a42"></div><div style="left:38px;top:8px;width:9px;height:1.300px;background:#6a7489"></div><div style="left:38px;top:10.5px;width:20px;height:1px;background:#c1c8d6"></div><div style="left:99px;top:9px;width:6px;height:1px;background:#c1c8d6"></div><div style="left:32px;top:30px;width:4px;height:4px;border-radius:50%;background:#5a4a42"></div><div style="left:38px;top:30px;width:9px;height:1.300px;background:#6a7489"></div><div style="left:38px;top:32.5px;width:20px;height:1px;background:#c1c8d6"></div><div style="left:99px;top:31px;width:6px;height:1px;background:#c1c8d6"></div><div style="left:32px;top:50px;width:4px;height:4px;border-radius:50%;background:#5a4a42"></div><div style="left:38px;top:50px;width:9px;height:1.300px;background:#6a7489"></div><div style="left:38px;top:52.5px;width:20px;height:1px;background:#c1c8d6"></div><div style="left:99px;top:51px;width:6px;height:1px;background:#c1c8d6"></div><div style="left:32px;top:67px;width:4px;height:4px;border-radius:50%;background:#5a4a42"></div><div style="left:38px;top:67px;width:9px;height:1.300px;background:#6a7489"></div><div style="left:38px;top:69.5px;width:20px;height:1px;background:#c1c8d6"></div><div style="left:99px;top:68px;width:6px;height:1px;background:#c1c8d6"></div><div style="left:32px;top:90px;width:4px;height:4px;border-radius:50%;background:#5a4a42"></div><div style="left:38px;top:90px;width:9px;height:1.300px;background:#6a7489"></div><div style="left:38px;top:92.5px;width:20px;height:1px;background:#c1c8d6"></div><div style="left:99px;top:91px;width:6px;height:1px;background:#c1c8d6"></div><div style="left:31px;top:14px;width:74px;height:4.500px;border-radius:1px;background:#e6eef9"></div><div style="left:34px;top:15.5px;width:26px;height:1.200px;background:#9fb6da"></div><div style="left:100px;top:15px;width:4px;height:2px;background:#6d8cc9"></div><div style="left:31px;top:73px;width:74px;height:4.500px;border-radius:1px;background:#e6eef9"></div><div style="left:34px;top:74.5px;width:26px;height:1.200px;background:#9fb6da"></div><div style="left:100px;top:74px;width:4px;height:2px;background:#6d8cc9"></div><div style="left:31px;top:96px;width:74px;height:4.500px;border-radius:1px;background:#e6eef9"></div><div style="left:34px;top:97.5px;width:26px;height:1.200px;background:#9fb6da"></div><div style="left:100px;top:97px;width:4px;height:2px;background:#6d8cc9"></div><div style="left:32px;top:21px;width:5px;height:1.500px;background:#5b7fd0"></div><div style="left:72px;top:24px;width:32px;height:1px;background:repeating-linear-gradient(90deg,#d5dbe6 0 1.500px,transparent 1.500px 3.600px)"></div><div style="left:32px;top:40px;width:5px;height:1.500px;background:#5b7fd0"></div><div style="left:72px;top:43px;width:32px;height:1px;background:repeating-linear-gradient(90deg,#d5dbe6 0 1.500px,transparent 1.500px 3.600px)"></div><div style="left:32px;top:58px;width:5px;height:1.500px;background:#5b7fd0"></div><div style="left:72px;top:61px;width:32px;height:1px;background:repeating-linear-gradient(90deg,#d5dbe6 0 1.500px,transparent 1.500px 3.600px)"></div><div style="left:32px;top:81px;width:5px;height:1.500px;background:#5b7fd0"></div><div style="left:72px;top:84px;width:32px;height:1px;background:repeating-linear-gradient(90deg,#d5dbe6 0 1.500px,transparent 1.500px 3.600px)"></div><div style="left:32px;top:35px;width:70px;height:1.100px;background:#b9c6dc"></div><div style="left:32px;top:37.500px;width:24px;height:1.100px;background:#b9c6dc"></div><div style="left:32px;top:55px;width:60px;height:1.100px;background:#b9c6dc"></div><div style="left:32px;top:78.500px;width:36px;height:1.100px;background:#b9c6dc"></div><div style="left:111px;top:8px;width:4.500px;height:4.500px;border-radius:50%;background:#a8573a"></div><div style="left:117px;top:9px;width:12px;height:1.500px;background:#59637a"></div><div style="left:183px;top:8px;width:3.500px;height:3.500px;border-radius:1px;background:#3b67c9"></div><div style="left:161px;top:14.500px;width:24px;height:1px;background:#cfdcf0"></div><div style="left:117px;top:22px;width:38px;height:67px;background:#f4f7fc;border:.6px solid #e3e9f3"></div><div style="left:119px;top:24px;width:34px;height:2.500px;background:#dfe7f3"></div><div style="left:119px;top:24.500px;width:3px;height:2px;background:#6a7fae"></div><div style="left:150px;top:24px;width:3px;height:2px;background:#444"></div><div style="left:111px;top:29px;width:4.500px;height:4.500px;border-radius:50%;background:#a8573a"></div><div style="left:118px;top:28.500px;width:6px;height:1.500px;background:#c94a4a"></div><div style="left:119px;top:40px;width:34px;height:2.500px;background:#dfe7f3"></div><div style="left:119px;top:40.500px;width:3px;height:2px;background:#6a7fae"></div><div style="left:150px;top:40px;width:3px;height:2px;background:#444"></div><div style="left:126px;top:47px;width:20px;height:25px;background:linear-gradient(180deg,#e9e4dc 0%,#cdb89a 35%,#b59a7e 60%,#5b8fd0 85%,#4a7fc4 100%);border:.5px solid #c9c9c9"></div><div style="left:130px;top:47px;width:10px;height:5px;background:#2d63c8;border-radius:0 0 50% 50%"></div><div style="left:131px;top:58px;width:4px;height:4px;border-radius:50%;background:#1a1a1a"></div><div style="left:135px;top:56px;width:7px;height:9px;border-radius:40%;background:#d9b99a"></div><div style="left:111px;top:75px;width:4.500px;height:4.500px;border-radius:50%;background:#a8573a"></div><div style="left:118px;top:76px;width:6px;height:1.500px;background:#59637a"></div><div style="left:118px;top:80.500px;width:36px;height:1px;background:repeating-linear-gradient(90deg,#d5dbe6 0 1.500px,transparent 1.500px 3.600px)"></div><div style="left:110px;top:87px;width:16px;height:1.200px;background:#aebbd2"></div><div style="left:111px;top:91px;width:4px;height:2.500px;background:#6f8fd6"></div><div style="left:117px;top:92px;width:5px;height:1px;background:#cfd5e1"></div><div style="left:4.500px;top:0;width:184.500px;height:106px;border-radius:9px;background:rgba(255,255,255,.38)"></div></div>
<div class="th" style="left:308px;top:922px;width:187px;height:106px;border-radius:10px"><div style="left:46.8px;top:2px;width:8px;height:1.500px;background:#8a8a8a"></div><div style="left:124.7px;top:1.500px;width:7px;height:2.500px;border-radius:1px;background:#4a63e8"></div><div style="left:134.6px;top:2px;width:5px;height:1.500px;background:#9ab"></div><div style="left:60px;top:10px;width:33.500px;height:59px;overflow:hidden;background:linear-gradient(180deg,#cfd9e6 0%,#c4d0e0 100%)"><div style="left:9px;top:5px;width:20px;height:13px;border-radius:50% 50% 20% 20%;background:#3a2a20"></div><div style="left:10px;top:9px;width:17px;height:22px;border-radius:40% 40% 45% 45%;background:radial-gradient(ellipse at 40% 45%,#d8a98c 0%,#c38d70 60%,#8a5c48 100%)"></div><div style="left:-2px;top:31px;width:38px;height:30px;border-radius:45% 45% 0 0;background:linear-gradient(160deg,#6b9fe0 0%,#4f86d2 50%,#3c6cb6 100%)"></div><div style="left:15px;top:31px;width:4px;height:22px;background:#b9452f;transform:rotate(6deg)"></div><div style="left:25px;top:50px;width:7px;height:8px;border-radius:40%;background:#e8d9c6"></div></div><div style="left:96px;top:12px;width:3.500px;height:3.500px;border-radius:50%;background:#2a3a4a;box-shadow:0 7px 0 #2a3a4a,0 36px 0 #2a3a4a"></div><div style="left:101px;top:12px;width:14px;height:1.500px;background:#8a8a8a"></div><div style="left:101px;top:15px;width:8px;height:1px;background:#bbb"></div><div style="left:101px;top:19px;width:22px;height:13px;background:repeating-linear-gradient(180deg,#b8b8b8 0 1px,#fff 1px 2.200px)"></div><div style="left:101px;top:36px;width:19px;height:5px;background:repeating-linear-gradient(180deg,#c4c4c4 0 1px,#fff 1px 2.200px)"></div><div style="left:108px;top:43px;width:3px;height:3px;border-radius:50%;border:.7px solid #888"></div><div style="left:101px;top:48px;width:14px;height:1.500px;background:#8a8a8a"></div><div style="left:101px;top:51px;width:20px;height:3px;background:repeating-linear-gradient(180deg,#c4c4c4 0 1px,#fff 1px 2px)"></div><div style="left:96px;top:58px;width:28px;height:.8px;background:#e2e2e2"></div><div style="left:96px;top:60px;width:9px;height:2.500px;background:#b5b5b5"></div><div style="left:122px;top:60px;width:2.500px;height:2.500px;background:#999"></div><div style="left:96px;top:65px;width:7px;height:1.500px;background:#a5a5a5"></div><div style="left:47px;top:80px;width:14px;height:1px;background:#bbb"></div><div style="left:47.5px;top:83px;width:30px;height:23px;overflow:hidden;background:linear-gradient(90deg,#2b2624 0%,#5b5048 35%,#3a3f4a 60%,#6b7485 100%)"><div style="left:4px;top:3px;width:12px;height:16px;border-radius:45%;background:#8a6a58"></div><div style="left:19px;top:4px;width:9px;height:14px;background:#546078"></div></div><div style="left:78.2px;top:83px;width:30px;height:23px;overflow:hidden;background:linear-gradient(90deg,#141213,#2d2522 50%,#161314)"><div style="left:6px;top:3px;width:13px;height:17px;border-radius:45%;background:#7a5a4a"></div></div><div style="left:108.9px;top:83px;width:30px;height:23px;overflow:hidden;background:#2a1f2c"><div style="left:0;top:9px;width:30px;height:7px;background:#e9dcae"></div><div style="left:5px;top:11px;width:20px;height:2.500px;background:#3a2a20"></div><div style="left:6px;top:18px;width:18px;height:1.500px;background:#6a5a62"></div></div></div>
<!-- ROW 6 -->
<div class="th" style="left:109px;top:1038px;width:189px;height:106px;border-radius:10px"><div style="left:47.2px;top:2px;width:8px;height:1.500px;background:#8a8a8a"></div><div style="left:126.1px;top:1.500px;width:7px;height:2.500px;border-radius:1px;background:#4a63e8"></div><div style="left:136.1px;top:2px;width:5px;height:1.500px;background:#9ab"></div><div style="left:60px;top:10px;width:33.500px;height:59px;overflow:hidden;background:#fff"><div style="left:22px;top:11px;width:4px;height:10px;background:#b5b5b5"></div><div style="left:14px;top:21px;width:20px;height:2.500px;border-radius:1px;border:.7px solid #999"></div><div style="left:8px;top:30px;width:16px;height:1.800px;background:#333"></div><div style="left:0;top:42px;width:33.500px;height:17px;background:#4bb7da"></div><div style="left:0;top:40.500px;width:33.500px;height:3px;background:radial-gradient(circle at 1.700px 3px,#4bb7da 0 1.700px,transparent 1.900px) 0 0/3.400px 3px"></div><div style="left:0;top:46px;width:33.500px;height:13px;background:repeating-linear-gradient(90deg,transparent 0 2.600px,rgba(255,255,255,.35) 2.600px 3.200px),repeating-linear-gradient(180deg,transparent 0 2.600px,rgba(255,255,255,.35) 2.600px 3.200px)"></div><div style="left:21px;top:33px;width:10px;height:7px;border-radius:50%;background:#3f9a4a"></div><div style="left:24px;top:38px;width:4px;height:6px;background:#a9713a"></div></div><div style="left:96px;top:12px;width:3.500px;height:3.500px;border-radius:50%;background:#555;box-shadow:0 7px 0 #555,0 36px 0 #555"></div><div style="left:101px;top:12px;width:14px;height:1.500px;background:#8a8a8a"></div><div style="left:101px;top:15px;width:8px;height:1px;background:#bbb"></div><div style="left:101px;top:19px;width:22px;height:13px;background:repeating-linear-gradient(180deg,#b8b8b8 0 1px,#fff 1px 2.200px)"></div><div style="left:101px;top:36px;width:19px;height:5px;background:repeating-linear-gradient(180deg,#c4c4c4 0 1px,#fff 1px 2.200px)"></div><div style="left:108px;top:43px;width:3px;height:3px;border-radius:50%;border:.7px solid #888"></div><div style="left:101px;top:48px;width:14px;height:1.500px;background:#8a8a8a"></div><div style="left:101px;top:51px;width:20px;height:3px;background:repeating-linear-gradient(180deg,#c4c4c4 0 1px,#fff 1px 2px)"></div><div style="left:96px;top:58px;width:28px;height:.8px;background:#e2e2e2"></div><div style="left:96px;top:60px;width:9px;height:2.500px;background:#b5b5b5"></div><div style="left:122px;top:60px;width:2.500px;height:2.500px;background:#999"></div><div style="left:96px;top:65px;width:7px;height:1.500px;background:#a5a5a5"></div><div style="left:47px;top:80px;width:14px;height:1px;background:#bbb"></div><div style="left:47.5px;top:83px;width:30px;height:23px;overflow:hidden;background:linear-gradient(90deg,#3b2a5a,#5a4a8a 50%,#2a2236)"><div style="left:9px;top:4px;width:12px;height:18px;border-radius:40%;background:#1c1a20"></div><div style="left:11px;top:3px;width:8px;height:8px;border-radius:50%;background:#c79a80"></div><div style="left:5px;top:19px;width:20px;height:2px;background:#ddd"></div></div><div style="left:78.2px;top:83px;width:30px;height:23px;overflow:hidden;background:linear-gradient(90deg,#1a1614,#3a2e28 60%,#20191a)"><div style="left:14px;top:7px;width:13px;height:13px;border-radius:50%;background:#c9bdb2"></div><div style="left:3px;top:9px;width:11px;height:12px;border-radius:50%;background:#6a4a3a"></div></div><div style="left:108.9px;top:83px;width:30px;height:23px;overflow:hidden;background:#f3f6f2"><div style="left:1px;top:6px;width:28px;height:7px;background:#2f7d5a;border-radius:1px"></div><div style="left:3px;top:8px;width:22px;height:2.500px;background:#dff0e6"></div><div style="left:0;top:15px;width:30px;height:9px;background:#3dbfa3"></div><div style="left:12px;top:16px;width:8px;height:8px;border-radius:50%;background:#5a3a2a"></div><div style="left:3px;top:14px;width:5px;height:5px;border-radius:50%;background:#e9553f"></div></div></div>
<div class="th" style="left:308px;top:1038px;width:187px;height:106px;border-radius:10px"><div style="left:46.8px;top:2px;width:8px;height:1.500px;background:#8a8a8a"></div><div style="left:124.7px;top:1.500px;width:7px;height:2.500px;border-radius:1px;background:#4a63e8"></div><div style="left:134.6px;top:2px;width:5px;height:1.500px;background:#9ab"></div><div style="left:60px;top:10px;width:33.500px;height:59px;overflow:hidden;background:linear-gradient(90deg,#c23ad0 0%,#8a2a9a 22%,#1a1018 45%,#0c0a0e 100%)"><div style="left:0;top:0;width:14px;height:30px;background:repeating-linear-gradient(180deg,rgba(255,255,255,.0) 0 1.500px,rgba(40,10,50,.35) 1.500px 2.500px)"></div><div style="left:9px;top:12px;width:12px;height:15px;border-radius:45%;background:radial-gradient(ellipse at 50% 50%,#c99a7c,#8a5f48)"></div><div style="left:9px;top:10px;width:12px;height:6px;border-radius:50% 50% 0 0;background:#1a1412"></div><div style="left:0;top:27px;width:33.500px;height:32px;border-radius:40% 40% 0 0;background:#111014"></div><div style="left:9px;top:38px;width:15px;height:2.500px;background:#7a66e8"></div><div style="left:24px;top:40px;width:8px;height:9px;border-radius:40%;background:#b88868"></div></div><div style="left:96px;top:12px;width:3.500px;height:3.500px;border-radius:50%;background:#222;box-shadow:0 7px 0 #222,0 36px 0 #222"></div><div style="left:101px;top:12px;width:14px;height:1.500px;background:#8a8a8a"></div><div style="left:101px;top:15px;width:8px;height:1px;background:#bbb"></div><div style="left:101px;top:19px;width:22px;height:13px;background:repeating-linear-gradient(180deg,#b8b8b8 0 1px,#fff 1px 2.200px)"></div><div style="left:101px;top:36px;width:19px;height:5px;background:repeating-linear-gradient(180deg,#c4c4c4 0 1px,#fff 1px 2.200px)"></div><div style="left:108px;top:43px;width:3px;height:3px;border-radius:50%;border:.7px solid #888"></div><div style="left:101px;top:48px;width:14px;height:1.500px;background:#8a8a8a"></div><div style="left:101px;top:51px;width:20px;height:3px;background:repeating-linear-gradient(180deg,#c4c4c4 0 1px,#fff 1px 2px)"></div><div style="left:96px;top:58px;width:28px;height:.8px;background:#e2e2e2"></div><div style="left:96px;top:60px;width:9px;height:2.500px;background:#b5b5b5"></div><div style="left:122px;top:60px;width:2.500px;height:2.500px;background:#999"></div><div style="left:96px;top:65px;width:7px;height:1.500px;background:#a5a5a5"></div><div style="left:47px;top:80px;width:14px;height:1px;background:#bbb"></div><div style="left:47.5px;top:83px;width:30px;height:23px;overflow:hidden;background:#121012"><div style="left:0;top:1px;width:12px;height:2.500px;background:#d8262a"></div><div style="left:1px;top:6px;width:25px;height:11px;background:repeating-linear-gradient(180deg,#e8e8e8 0 2.400px,#121012 2.400px 3.700px)"></div><div style="left:12px;top:17px;width:8px;height:7px;border-radius:50% 50% 0 0;background:#8a6a5a"></div></div><div style="left:78.2px;top:83px;width:30px;height:23px;overflow:hidden;background:linear-gradient(180deg,#5a6a80 0%,#8a95a6 40%,#3a4250 100%)"><div style="left:3px;top:13px;width:8px;height:10px;background:#3f7fc8;border-radius:3px 3px 0 0"></div><div style="left:15px;top:12px;width:8px;height:11px;background:#22262e;border-radius:3px 3px 0 0"></div><div style="left:4px;top:4px;width:22px;height:3px;background:#c5ccd6"></div></div><div style="left:108.9px;top:83px;width:30px;height:23px;overflow:hidden;background:linear-gradient(180deg,#141a3a 0%,#1d2a5a 50%,#0e1226 100%)"><div style="left:6px;top:8px;width:6px;height:15px;border-radius:3px 3px 0 0;background:#0c0c12"></div><div style="left:7px;top:5px;width:4px;height:4px;border-radius:50%;background:#c9a890"></div><div style="left:20px;top:8px;width:6px;height:15px;border-radius:3px 3px 0 0;background:#23232e"></div><div style="left:21px;top:5px;width:4px;height:4px;border-radius:50%;background:#c9a890"></div><div style="left:2px;top:2px;width:26px;height:2px;background:repeating-linear-gradient(90deg,#6a86e0 0 1.500px,transparent 1.500px 4px)"></div></div></div>
<!-- ROW 7 -->
<div class="th" style="left:109px;top:1154px;width:189px;height:105px;border-radius:10px"><div style="left:47.2px;top:2px;width:8px;height:1.500px;background:#8a8a8a"></div><div style="left:126.1px;top:1.500px;width:7px;height:2.500px;border-radius:1px;background:#4a63e8"></div><div style="left:136.1px;top:2px;width:5px;height:1.500px;background:#9ab"></div><div style="left:60px;top:10px;width:33.500px;height:59px;overflow:hidden;background:linear-gradient(90deg,#8e8c8a 0%,#a3a09c 50%,#7a7876 100%)"><div style="left:6px;top:6px;width:21px;height:16px;border-radius:50% 50% 30% 30%;background:#17120f"></div><div style="left:8px;top:11px;width:17px;height:22px;border-radius:40% 40% 45% 45%;background:radial-gradient(ellipse at 50% 45%,#c9916a 0%,#a87050 65%,#5a3a2a 100%)"></div><div style="left:10px;top:24px;width:13px;height:9px;border-radius:30% 30% 50% 50%;background:#2a1c16"></div><div style="left:13px;top:26px;width:7px;height:2.500px;border-radius:40%;background:#efe6e0"></div><div style="left:-2px;top:36px;width:38px;height:26px;border-radius:45% 45% 0 0;background:repeating-linear-gradient(90deg,#e3b92c 0 3.500px,#2a2418 3.500px 4.800px),#e3b92c"></div><div style="left:-2px;top:36px;width:38px;height:26px;border-radius:45% 45% 0 0;background:repeating-linear-gradient(180deg,transparent 0 3.500px,rgba(42,36,24,.8) 3.500px 4.800px)"></div><div style="left:13px;top:35px;width:8px;height:24px;background:#15120f"></div></div><div style="left:96px;top:12px;width:3.500px;height:3.500px;border-radius:50%;background:#333;box-shadow:0 7px 0 #333,0 36px 0 #333"></div><div style="left:101px;top:12px;width:14px;height:1.500px;background:#8a8a8a"></div><div style="left:101px;top:15px;width:8px;height:1px;background:#bbb"></div><div style="left:101px;top:19px;width:22px;height:13px;background:repeating-linear-gradient(180deg,#b8b8b8 0 1px,#fff 1px 2.200px)"></div><div style="left:101px;top:36px;width:19px;height:5px;background:repeating-linear-gradient(180deg,#c4c4c4 0 1px,#fff 1px 2.200px)"></div><div style="left:108px;top:43px;width:3px;height:3px;border-radius:50%;border:.7px solid #888"></div><div style="left:101px;top:48px;width:14px;height:1.500px;background:#8a8a8a"></div><div style="left:101px;top:51px;width:20px;height:3px;background:repeating-linear-gradient(180deg,#c4c4c4 0 1px,#fff 1px 2px)"></div><div style="left:96px;top:58px;width:28px;height:.8px;background:#e2e2e2"></div><div style="left:96px;top:60px;width:9px;height:2.500px;background:#b5b5b5"></div><div style="left:122px;top:60px;width:2.500px;height:2.500px;background:#999"></div><div style="left:96px;top:65px;width:7px;height:1.500px;background:#a5a5a5"></div><div style="left:47px;top:80px;width:14px;height:1px;background:#bbb"></div><div style="left:47.5px;top:83px;width:30px;height:22px;overflow:hidden;background:linear-gradient(90deg,#7a7a72,#9a9688 50%,#6a6a60)"><div style="left:7px;top:4px;width:15px;height:19px;border-radius:45% 45% 0 0;background:#1c1612"></div><div style="left:9px;top:9px;width:11px;height:13px;border-radius:45%;background:#b07a58"></div></div><div style="left:78.2px;top:83px;width:30px;height:22px;overflow:hidden;background:linear-gradient(90deg,#8a8a80,#b0aa98 60%,#7a766a)"><div style="left:8px;top:4px;width:14px;height:19px;border-radius:45% 45% 0 0;background:#1c1612"></div><div style="left:10px;top:9px;width:10px;height:13px;border-radius:45%;background:#b07a58"></div></div><div style="left:108.9px;top:83px;width:30px;height:22px;overflow:hidden;background:linear-gradient(90deg,#4a7a32,#7aa84a 50%,#3d6a2a)"><div style="left:8px;top:4px;width:14px;height:19px;border-radius:45% 45% 0 0;background:#1c1612"></div><div style="left:10px;top:9px;width:10px;height:13px;border-radius:45%;background:#b07a58"></div></div></div>
<div class="th" style="left:308px;top:1154px;width:187px;height:105px;border-radius:10px"><div style="left:46.8px;top:2px;width:8px;height:1.500px;background:#8a8a8a"></div><div style="left:124.7px;top:1.500px;width:7px;height:2.500px;border-radius:1px;background:#4a63e8"></div><div style="left:134.6px;top:2px;width:5px;height:1.500px;background:#9ab"></div><div style="left:60px;top:10px;width:33.500px;height:59px;overflow:hidden;background:linear-gradient(180deg,#cfd9e6 0%,#c4d0e0 100%)"><div style="left:9px;top:5px;width:20px;height:13px;border-radius:50% 50% 20% 20%;background:#3a2a20"></div><div style="left:10px;top:9px;width:17px;height:22px;border-radius:40% 40% 45% 45%;background:radial-gradient(ellipse at 40% 45%,#d8a98c 0%,#c38d70 60%,#8a5c48 100%)"></div><div style="left:-2px;top:31px;width:38px;height:30px;border-radius:45% 45% 0 0;background:linear-gradient(160deg,#6b9fe0 0%,#4f86d2 50%,#3c6cb6 100%)"></div><div style="left:15px;top:31px;width:4px;height:22px;background:#b9452f;transform:rotate(6deg)"></div><div style="left:25px;top:50px;width:7px;height:8px;border-radius:40%;background:#e8d9c6"></div></div><div style="left:96px;top:12px;width:3.500px;height:3.500px;border-radius:50%;background:#2a3a4a;box-shadow:0 7px 0 #2a3a4a,0 36px 0 #2a3a4a"></div><div style="left:101px;top:12px;width:14px;height:1.500px;background:#8a8a8a"></div><div style="left:101px;top:15px;width:8px;height:1px;background:#bbb"></div><div style="left:101px;top:19px;width:22px;height:13px;background:repeating-linear-gradient(180deg,#b8b8b8 0 1px,#fff 1px 2.200px)"></div><div style="left:101px;top:36px;width:19px;height:5px;background:repeating-linear-gradient(180deg,#c4c4c4 0 1px,#fff 1px 2.200px)"></div><div style="left:108px;top:43px;width:3px;height:3px;border-radius:50%;border:.7px solid #888"></div><div style="left:101px;top:48px;width:14px;height:1.500px;background:#8a8a8a"></div><div style="left:101px;top:51px;width:20px;height:3px;background:repeating-linear-gradient(180deg,#c4c4c4 0 1px,#fff 1px 2px)"></div><div style="left:96px;top:58px;width:28px;height:.8px;background:#e2e2e2"></div><div style="left:96px;top:60px;width:9px;height:2.500px;background:#b5b5b5"></div><div style="left:122px;top:60px;width:2.500px;height:2.500px;background:#999"></div><div style="left:96px;top:65px;width:7px;height:1.500px;background:#a5a5a5"></div><div style="left:47px;top:80px;width:14px;height:1px;background:#bbb"></div><div style="left:47.5px;top:83px;width:30px;height:22px;overflow:hidden;background:linear-gradient(90deg,#2b2624 0%,#5b5048 35%,#3a3f4a 60%,#6b7485 100%)"><div style="left:4px;top:3px;width:12px;height:16px;border-radius:45%;background:#8a6a58"></div><div style="left:19px;top:4px;width:9px;height:14px;background:#546078"></div></div><div style="left:78.2px;top:83px;width:30px;height:22px;overflow:hidden;background:linear-gradient(90deg,#141213,#2d2522 50%,#161314)"><div style="left:6px;top:3px;width:13px;height:17px;border-radius:45%;background:#7a5a4a"></div></div><div style="left:108.9px;top:83px;width:30px;height:22px;overflow:hidden;background:#2a1f2c"><div style="left:0;top:9px;width:30px;height:7px;background:#e9dcae"></div><div style="left:5px;top:11px;width:20px;height:2.500px;background:#3a2a20"></div><div style="left:6px;top:18px;width:18px;height:1.500px;background:#6a5a62"></div></div></div>
<!-- ROW 8 -->
<div class="th" style="left:109px;top:1269px;width:243px;height:70px;border-radius:10px"><div style="left:61px;top:3px;width:12px;height:2px;background:#333"></div><div style="left:162px;top:2px;width:9px;height:3.500px;border-radius:1px;background:#4a63e8"></div><div style="left:175px;top:3px;width:6px;height:1.500px;background:#9ab"></div><div style="left:78px;top:12px;width:43px;height:58px;background:linear-gradient(180deg,#3f9ddb 0,#3f9ddb 20px,#c9cfd2 20px,#bfc4c6 100%);overflow:hidden"><div style="left:8px;top:8px;width:27px;height:5px;background:repeating-linear-gradient(180deg,#fff 0 2px,transparent 2px 3px)"></div><div style="left:12px;top:22px;width:24px;height:20px;border-radius:50% 50% 20% 20%;background:#e6d3a8"></div><div style="left:16px;top:29px;width:16px;height:20px;border-radius:45%;background:#e3b9a0"></div><div style="left:0;top:22px;width:10px;height:24px;background:#5a7a4a"></div></div><div style="left:124px;top:13px;width:4px;height:4px;border-radius:50%;background:#c2453a"></div><div style="left:130px;top:13px;width:20px;height:1.500px;background:#666"></div><div style="left:128px;top:18px;width:32px;height:40px;background:repeating-linear-gradient(180deg,#adadad 0 1.100px,#fff 1.100px 2.600px)"></div><div style="left:128px;top:28px;width:32px;height:2px;background:#fff"></div><div style="left:128px;top:40px;width:32px;height:2.500px;background:#fff"></div><div style="left:161px;top:34px;width:1.500px;height:10px;background:#888"></div></div>
<div class="th" style="left:362px;top:1269px;width:62px;height:70px;border-radius:10px"><div style="left:5px;top:8px;width:3px;height:2px;background:#555"></div><div style="left:12px;top:8px;width:11px;height:2px;background:#444"></div><div style="left:52px;top:8px;width:6px;height:2px;background:#aaa"></div><div style="left:8px;top:25px;width:46px;height:1px;background:#ddd"></div><div style="left:23px;top:30px;width:15px;height:1.500px;background:#6d8fe0"></div><div style="left:16px;top:36px;width:30px;height:34px;border-radius:4px 4px 0 0;background:#ede0c0"></div><div style="left:16px;top:36px;width:30px;height:8px;border-radius:4px 4px 0 0;background:#0a0a0a"></div></div>
<div class="th" style="left:433px;top:1269px;width:62px;height:70px;border-radius:10px;background:#ede0c0"><div style="left:0;top:0;width:62px;height:24px;background:#060606"></div><div style="left:5px;top:8px;width:3px;height:2px;background:#ccc"></div><div style="left:11px;top:8px;width:9px;height:2px;background:#bbb"></div><div style="left:55px;top:7px;width:3px;height:3px;border-radius:50%;background:#ccc"></div><div style="left:18px;top:43px;width:26px;height:2px;background:#7a7160"></div><div style="left:17px;top:49px;width:28px;height:2px;background:#7a7160"></div><div style="left:18px;top:55px;width:26px;height:2px;background:#7a7160"></div></div>
<!-- CANVAS PAGE -->
<div id="page" style="left:1213px;top:144.500px;width:481px;height:848px;background:#8b3dff;border-radius:1px"></div>
<div id="pg" style="left:1216.500px;top:148px;width:473.500px;height:841px;overflow:hidden;background:#fff">
<div style="left:0;top:0;width:474px;height:26px;background:#2b2d33"></div>
<div style="left:0;top:26px;width:474px;height:40px;background:#f4f7fb;border-bottom:1px solid #eceff5"></div>
<div class="t" style="left:10px;top:35px;font-size:13.500px;color:#2d68c9;letter-spacing:.25px">Trending sounds</div>
<div class="t" style="left:132px;top:35px;font-size:13.500px;color:#1d2b5a;letter-spacing:.2px">Media library</div>
<div style="left:10px;top:57px;width:103px;height:2px;background:#2f72d8;border-radius:1px"></div>
<div style="left:16px;top:81px;width:190.5px;height:140px;border-radius:4px;background:#f8f9fc"></div>
<div style="left:16px;top:81px;width:190.5px;height:88.5px;border-radius:4px 4px 0 0;overflow:hidden;background:#c91f2e"><div style="left:0;top:0;width:190.5px;height:88.5px;filter:blur(.45px)"><div style="left:0px;top:0px;width:15px;height:89px;background:linear-gradient(90deg,#6a0e16 0 1.500px,#e24a30 1.500px 9px,#7a1218 9px 11px,#e0a060 11px 12px,#c91f2e 12px 13px,#5a0c14 13px 15px);"></div><div style="left:3px;top:0px;width:5px;height:89px;background:repeating-linear-gradient(180deg,#f4d0a0 0 2px,transparent 2px 9px);opacity:.55"></div><div style="left:176px;top:0px;width:15px;height:89px;background:linear-gradient(90deg,#5a0c14 0 2px,#c91f2e 2px 3px,#e24a30 3px 10px,#f0c050 10px 11px,#e24a30 11px 12.500px,#6a0e16 12.500px 15px);"></div><div style="left:180px;top:0px;width:5px;height:89px;background:repeating-linear-gradient(180deg,#f4d0a0 0 2px,transparent 2px 9px);opacity:.55"></div><div class="t" style="left:19px;top:-.5px;font-family:'Liberation Serif',serif;font-size:15.300px;color:#f6ebe6;letter-spacing:.35px">CHRISTMAS ALBUM</div><div style="left:22px;top:17px;width:54px;height:64px;background:repeating-linear-gradient(180deg,rgba(110,14,28,.55) 0 2.200px,transparent 2.200px 5.800px);filter:blur(.5px);clip-path:polygon(25% 0,75% 0,100% 12%,100% 100%,10% 100%,0 30%)"></div><div style="left:82px;top:13px;width:60px;height:50px;background:radial-gradient(ellipse at 50% 60%,#5a3a1c 0%,#4a2e16 60%,#3a2210 100%);border-radius:48% 52% 30% 30%"></div><div style="left:85px;top:31px;width:56px;height:72px;background:radial-gradient(ellipse at 55% 38%,#f6c25a 0%,#eda040 35%,#e08232 65%,#b85a22 90%);border-radius:40% 42% 48% 48%"></div><div style="left:80px;top:44px;width:9px;height:16px;background:#d9782c;border-radius:50%"></div><div style="left:96px;top:57px;width:12px;height:3px;background:#4a2e14;border-radius:50%"></div><div style="left:120px;top:57px;width:12px;height:3px;background:#4a2e14;border-radius:50%"></div><div style="left:94px;top:52px;width:15px;height:1.8px;background:#6a3e1c;border-radius:50%;transform:rotate(-6deg)"></div><div style="left:119px;top:52px;width:15px;height:1.8px;background:#6a3e1c;border-radius:50%;transform:rotate(6deg)"></div><div style="left:109px;top:60px;width:7px;height:14px;background:rgba(200,110,40,.6);border-radius:40%"></div><div style="left:100px;top:80px;width:28px;height:9px;background:#b0421e;border-radius:50% 50% 0 0"></div><div style="left:104px;top:82px;width:20px;height:7px;background:#f0e0d0;border-radius:50% 50% 0 0"></div></div></div>
<div style="left:19.5px;top:84.5px;width:15px;height:15px;border-radius:50%;background:rgba(235,238,245,.88);border:.6px solid rgba(255,255,255,.9)"></div>
<svg style="left:23.5px;top:89px" width="8" height="6" viewBox="0 0 8 6"><path d="M1 3.200 3 5 7 1" fill="none" stroke="#b5b9c4" stroke-width="1.100"/></svg>
<svg style="left:29px;top:180px" width="7" height="8" viewBox="0 0 7 8"><path d="M.5.500 6.500 4 .5 7.500Z" fill="#a7acb9"/></svg>
<div style="left:47px;top:181px;width:6px;height:6px;border-radius:50%;background:#0f2154"></div>
<div class="t" style="left:166px;top:180px;width:34px;text-align:right;font-size:8.500px;color:#2b4b8c">0:30</div>
<div class="t" style="left:16px;top:200px;width:190.5px;text-align:center;font-size:7.800px;color:#8b909c">It's the Most Wonderful Time of the Year</div>
<div class="t" style="left:16px;top:213px;width:190.5px;text-align:center;font-size:7.800px;color:#8b909c">705.47 KiB, 00:30, MP3</div>
<div style="left:218.5px;top:81px;width:190.5px;height:140px;border-radius:4px;background:#f8f9fc"></div>
<div style="left:218.5px;top:81px;width:190.5px;height:88.5px;border-radius:4px 4px 0 0;overflow:hidden;background:#3b55a9"><div style="left:0;top:0;width:190.5px;height:88.5px;"><div class="t b" style="left:47px;top:7px;font-size:37px;color:#d7de4f;transform:rotate(-9deg);letter-spacing:-2.200px;text-shadow:0 0 1px #d7de4f">touch</div><div class="t b" style="left:35px;top:44px;font-size:37px;color:#d7de4f;transform:rotate(-7deg);letter-spacing:-1.400px;word-spacing:4px;text-shadow:0 0 1px #d7de4f">of funk</div></div></div>
<div style="left:222.0px;top:84.5px;width:15px;height:15px;border-radius:50%;background:rgba(235,238,245,.88);border:.6px solid rgba(255,255,255,.9)"></div>
<svg style="left:226.0px;top:89px" width="8" height="6" viewBox="0 0 8 6"><path d="M1 3.200 3 5 7 1" fill="none" stroke="#b5b9c4" stroke-width="1.100"/></svg>
<svg style="left:231.5px;top:180px" width="7" height="8" viewBox="0 0 7 8"><path d="M.5.500 6.500 4 .5 7.500Z" fill="#a7acb9"/></svg>
<div style="left:249.5px;top:181px;width:6px;height:6px;border-radius:50%;background:#0f2154"></div>
<div class="t" style="left:368.5px;top:180px;width:34px;text-align:right;font-size:8.500px;color:#2b4b8c">0:42</div>
<div class="t" style="left:218.5px;top:200px;width:190.5px;text-align:center;font-size:7.800px;color:#8b909c">RAYE with a Touch Of Funk</div>
<div class="t" style="left:218.5px;top:213px;width:190.5px;text-align:center;font-size:7.800px;color:#8b909c">989.53 KiB, 00:42, MP3</div>
<div style="left:421.5px;top:81px;width:190.5px;height:140px;border-radius:4px;background:#f8f9fc"></div>
<div style="left:421.5px;top:81px;width:190.5px;height:88.5px;border-radius:4px 4px 0 0;overflow:hidden;background:linear-gradient(180deg,#f6f4ef,#fbfaf8)"><div style="left:0;top:0;width:190.5px;height:88.5px;"><div style="left:14px;top:-8px;width:34px;height:30px;background:linear-gradient(160deg,#4a2810 0%,#7a4a24 60%,#9a6436 100%);border-radius:30% 30% 40% 40%;transform:rotate(10deg)"></div><div style="left:2px;top:10px;width:40px;height:34px;background:linear-gradient(140deg,#6a3a18 0%,#8a5228 50%,#a86c3a 100%);border-radius:50% 30% 40% 60%;transform:rotate(20deg)"></div><div style="left:20px;top:26px;width:50px;height:18px;background:linear-gradient(180deg,#9a6030,#b47a44);border-radius:40% 20% 20% 50%;transform:rotate(24deg)"></div></div></div>
<div style="left:425.0px;top:84.5px;width:15px;height:15px;border-radius:50%;background:rgba(235,238,245,.88);border:.6px solid rgba(255,255,255,.9)"></div>
<svg style="left:429.0px;top:89px" width="8" height="6" viewBox="0 0 8 6"><path d="M1 3.200 3 5 7 1" fill="none" stroke="#b5b9c4" stroke-width="1.100"/></svg>
<svg style="left:434.5px;top:180px" width="7" height="8" viewBox="0 0 7 8"><path d="M.5.500 6.500 4 .5 7.500Z" fill="#a7acb9"/></svg>
<div style="left:452.5px;top:181px;width:6px;height:6px;border-radius:50%;background:#0f2154"></div>
<div style="left:16px;top:234.7px;width:190.5px;height:140px;border-radius:4px;background:#f8f9fc"></div>
<div style="left:16px;top:234.7px;width:190.5px;height:88.5px;border-radius:4px 4px 0 0;overflow:hidden;background:linear-gradient(180deg,#1c1648 0%,#18123c 45%,#0c0a20 80%,#06050f 100%)"><div style="left:0;top:0;width:190.5px;height:88.5px;"><div style="left:60px;top:-6px;width:130px;height:70px;background:radial-gradient(ellipse at 45% 45%,rgba(176,32,52,.95) 0%,rgba(140,26,56,.7) 35%,rgba(80,24,80,.35) 60%,transparent 78%);transform:rotate(-14deg)"></div><div style="left:0px;top:0px;width:70px;height:50px;background:radial-gradient(ellipse at 40% 40%,rgba(50,44,130,.7) 0%,transparent 70%);"></div><div style="left:0px;top:0px;width:190px;height:60px;background:radial-gradient(circle at 1px 1px,rgba(255,255,255,.35) 0 .5px,transparent .8px) 3px 2px/23px 17px;"></div><div class="t b" style="left:125px;top:3px;font-family:'Liberation Serif',serif;font-size:4px;color:#cfc6d6;letter-spacing:.3px">PERFORMED BY</div><div class="t b" style="left:110px;top:9px;font-family:'Liberation Serif',serif;font-size:6.800px;color:#efe8f0;letter-spacing:.1px">LONDON MUSIC WORKS</div><div style="left:30px;top:66px;width:52px;height:30px;background:transparent;border-radius:50%;border:3px solid #5a78b0;opacity:.75;transform:rotate(-10deg)"></div><div style="left:84px;top:76px;width:44px;height:24px;background:transparent;border-radius:50%;border:3px solid #4a6aa8;opacity:.75"></div><div style="left:38px;top:70px;width:84px;height:3.5px;background:#e04a4a;transform:rotate(4deg);border-radius:2px"></div><div style="left:62px;top:64px;width:58px;height:3px;background:#c83a44;transform:rotate(-12deg);border-radius:2px"></div><div style="left:44px;top:62px;width:40px;height:3px;background:#d8505a;transform:rotate(22deg);border-radius:2px"></div><div style="left:124px;top:22px;width:2.5px;height:46px;background:#d8606a;transform:rotate(12deg);border-radius:1px"></div><div style="left:126px;top:20px;width:5px;height:5px;background:#e8a0a0;border-radius:50%"></div><div style="left:70px;top:58px;width:22px;height:3px;background:#9aa6c8;transform:rotate(-8deg);border-radius:2px"></div></div></div>
<div style="left:19.5px;top:238.2px;width:15px;height:15px;border-radius:50%;background:rgba(235,238,245,.88);border:.6px solid rgba(255,255,255,.9)"></div>
<svg style="left:23.5px;top:242.7px" width="8" height="6" viewBox="0 0 8 6"><path d="M1 3.200 3 5 7 1" fill="none" stroke="#b5b9c4" stroke-width="1.100"/></svg>
<svg style="left:29px;top:333.7px" width="7" height="8" viewBox="0 0 7 8"><path d="M.5.500 6.500 4 .5 7.500Z" fill="#a7acb9"/></svg>
<div style="left:47px;top:334.7px;width:6px;height:6px;border-radius:50%;background:#0f2154"></div>
<div class="t" style="left:166px;top:333.7px;width:34px;text-align:right;font-size:8.500px;color:#2b4b8c">0:30</div>
<div class="t" style="left:16px;top:353.7px;width:190.5px;text-align:center;font-size:7.800px;color:#8b909c">Stranger Things Theme</div>
<div class="t" style="left:16px;top:366.7px;width:190.5px;text-align:center;font-size:7.800px;color:#8b909c">705.47 KiB, 00:30, MP3</div>
<div style="left:218.5px;top:234.7px;width:190.5px;height:140px;border-radius:4px;background:#f8f9fc"></div>
<div style="left:218.5px;top:234.7px;width:190.5px;height:88.5px;border-radius:4px 4px 0 0;overflow:hidden;background:#232325"><div style="left:0;top:0;width:190.5px;height:88.5px;"><div style="left:12px;top:0px;width:46px;height:2.5px;background:linear-gradient(90deg,#b84a20,#8a3a1a 60%,transparent);"></div><div style="left:84px;top:-4px;width:26px;height:16px;background:#1a1a1c;border-radius:40%"></div><div style="left:62px;top:10px;width:66px;height:90px;background:linear-gradient(95deg,#5a5a5c 0%,#c9c9cb 22%,#f0f0f2 45%,#e2e2e4 60%,#7a7a7c 82%,#3a3a3c 100%);border-radius:46% 40% 10% 10%;transform:rotate(4deg)"></div><div style="left:92px;top:2px;width:46px;height:20px;background:linear-gradient(90deg,#e9e9eb,#b8b8ba);border-radius:40% 50% 50% 30%;transform:rotate(8deg)"></div><div style="left:112px;top:4px;width:22px;height:7px;background:#1c1c1e;border-radius:40%"></div><div style="left:100px;top:18px;width:22px;height:50px;background:linear-gradient(90deg,#2a2a2c,#4a4a4c);border-radius:30%;transform:rotate(-8deg);opacity:.85"></div><div style="left:120px;top:18px;width:18px;height:56px;background:linear-gradient(90deg,#d9d9db,#8a8a8c);border-radius:40% 40% 30% 30%;transform:rotate(-6deg)"></div><div style="left:70px;top:40px;width:20px;height:50px;background:rgba(40,40,42,.45);border-radius:50%;transform:rotate(10deg)"></div></div></div>
<div style="left:222.0px;top:238.2px;width:15px;height:15px;border-radius:50%;background:rgba(235,238,245,.88);border:.6px solid rgba(255,255,255,.9)"></div>
<svg style="left:226.0px;top:242.7px" width="8" height="6" viewBox="0 0 8 6"><path d="M1 3.200 3 5 7 1" fill="none" stroke="#b5b9c4" stroke-width="1.100"/></svg>
<svg style="left:231.5px;top:333.7px" width="7" height="8" viewBox="0 0 7 8"><path d="M.5.500 6.500 4 .5 7.500Z" fill="#a7acb9"/></svg>
<div style="left:249.5px;top:334.7px;width:6px;height:6px;border-radius:50%;background:#0f2154"></div>
<div class="t" style="left:368.5px;top:333.7px;width:34px;text-align:right;font-size:8.500px;color:#2b4b8c">0:30</div>
<div class="t" style="left:218.5px;top:353.7px;width:190.5px;text-align:center;font-size:7.800px;color:#8b909c">Beautiful Things (Piano Instrumental)</div>
<div class="t" style="left:218.5px;top:366.7px;width:190.5px;text-align:center;font-size:7.800px;color:#8b909c">705.47 KiB, 00:30, MP3</div>
<div style="left:421.5px;top:234.7px;width:190.5px;height:140px;border-radius:4px;background:#f8f9fc"></div>
<div style="left:421.5px;top:234.7px;width:190.5px;height:88.5px;border-radius:4px 4px 0 0;overflow:hidden;background:#7b4b33"><div style="left:0;top:0;width:190.5px;height:88.5px;"><div class="t" style="left:26px;top:12.500px;font-size:17.500px;color:#d39a55;transform:scaleY(1.39);transform-origin:0 0">GR</div><div class="t" style="left:3.500px;top:32px;font-size:16px;color:#d39a55;transform:scaleY(1.35);transform-origin:0 0;letter-spacing:-.2px">POTAT</div></div></div>
<div style="left:425.0px;top:238.2px;width:15px;height:15px;border-radius:50%;background:rgba(235,238,245,.88);border:.6px solid rgba(255,255,255,.9)"></div>
<svg style="left:429.0px;top:242.7px" width="8" height="6" viewBox="0 0 8 6"><path d="M1 3.200 3 5 7 1" fill="none" stroke="#b5b9c4" stroke-width="1.100"/></svg>
<svg style="left:434.5px;top:333.7px" width="7" height="8" viewBox="0 0 7 8"><path d="M.5.500 6.500 4 .5 7.500Z" fill="#a7acb9"/></svg>
<div style="left:452.5px;top:334.7px;width:6px;height:6px;border-radius:50%;background:#0f2154"></div>
<div style="left:16px;top:388.4px;width:190.5px;height:140px;border-radius:4px;background:#f8f9fc"></div>
<div style="left:16px;top:388.4px;width:190.5px;height:88.5px;border-radius:4px 4px 0 0;overflow:hidden;background:linear-gradient(90deg,#e1e2e2 0%,#e7e8e8 30%,#e2e3e3 60%,#e6e7e7 100%)"><div style="left:0;top:0;width:190.5px;height:88.5px;filter:blur(.4px)"><div style="left:58px;top:33px;width:1.5px;height:13px;background:#a9a9ab;"></div><div style="left:64px;top:44px;width:1.2px;height:4px;background:#b5b5b7;"></div><div style="left:73px;top:36px;width:3.5px;height:13px;background:repeating-linear-gradient(90deg,#a9a9ab 0 1.200px,transparent 1.200px 2.300px);"></div><div style="left:80px;top:46px;width:1.2px;height:4px;background:#b5b5b7;"></div><div style="left:89px;top:35px;width:7px;height:14px;background:repeating-linear-gradient(90deg,#a9a9ab 0 1.200px,transparent 1.200px 2.600px);transform:skewX(6deg)"></div><div style="left:101px;top:47px;width:1.2px;height:4px;background:#b5b5b7;"></div><div style="left:108px;top:38px;width:12px;height:9px;background:transparent;border-radius:50%;border:1.500px solid #a0a0a2"></div><div style="left:119px;top:38px;width:12px;height:9px;background:transparent;border-radius:50%;border:1.500px solid #a0a0a2"></div></div></div>
<div style="left:19.5px;top:391.9px;width:15px;height:15px;border-radius:50%;background:rgba(235,238,245,.88);border:.6px solid rgba(255,255,255,.9)"></div>
<svg style="left:23.5px;top:396.4px" width="8" height="6" viewBox="0 0 8 6"><path d="M1 3.200 3 5 7 1" fill="none" stroke="#b5b9c4" stroke-width="1.100"/></svg>
<svg style="left:29px;top:487.4px" width="7" height="8" viewBox="0 0 7 8"><path d="M.5.500 6.500 4 .5 7.500Z" fill="#a7acb9"/></svg>
<div style="left:47px;top:488.4px;width:6px;height:6px;border-radius:50%;background:#0f2154"></div>
<div class="t" style="left:166px;top:487.4px;width:34px;text-align:right;font-size:8.500px;color:#2b4b8c">0:30</div>
<div class="t" style="left:16px;top:507.4px;width:190.5px;text-align:center;font-size:7.800px;color:#8b909c">Counting My Blessings</div>
<div class="t" style="left:16px;top:520.4px;width:190.5px;text-align:center;font-size:7.800px;color:#8b909c">705.47 KiB, 00:30, MP3</div>
<div style="left:218.5px;top:388.4px;width:190.5px;height:140px;border-radius:4px;background:#f8f9fc"></div>
<div style="left:218.5px;top:388.4px;width:190.5px;height:88.5px;border-radius:4px 4px 0 0;overflow:hidden;background:#fbfbfb"><div style="left:0;top:0;width:190.5px;height:88.5px;"><div style="left:4.5px;top:0px;width:181px;height:89px;background:linear-gradient(90deg,#c9cbcf 0%,#e9eaec 4%,#f4f4f6 12%,#f4f4f6 100%);"></div><div style="left:4.500px;top:0;width:181px;height:89px;overflow:hidden"><div style="left:21px;top:-33px;width:150px;height:150px;background:conic-gradient(from 0deg at 50% 50%,#18181a 0deg,#18181a 24deg,#7ad8ea 34deg,#c9f0f4 55deg,#f4f4e8 80deg,#f6e080 105deg,#f0a040 125deg,#1c1e38 140deg,#1c1e38 218deg,#e8e4a0 232deg,#f4f0c0 250deg,#f2f2f4 275deg,#5ad0e0 292deg,#eaf6fa 300deg,#dfe0e4 325deg,#3ad060 338deg,#18181a 344deg,#18181a 360deg);border-radius:50%;box-shadow:0 0 0 1.500px #b9bcc4,0 0 0 4px #e6e8ec"></div><div style="left:69px;top:15px;width:54px;height:54px;background:#141416;border-radius:50%"></div><div style="left:72px;top:18px;width:48px;height:48px;background:radial-gradient(circle,#d9d9dd 0%,#c4c4c8 55%,#a8a8ac 100%);border-radius:50%"></div><div style="left:84px;top:30px;width:24px;height:24px;background:radial-gradient(circle,#c9c9cd 0%,#b4b4b8 100%);border-radius:50%;border:1px solid #a4a4a8"></div></div><div style="left:132px;top:18px;width:53.5px;height:55px;background:#f80a00;border-radius:3px"></div></div></div>
<div style="left:222.0px;top:391.9px;width:15px;height:15px;border-radius:50%;background:rgba(235,238,245,.88);border:.6px solid rgba(255,255,255,.9)"></div>
<svg style="left:226.0px;top:396.4px" width="8" height="6" viewBox="0 0 8 6"><path d="M1 3.200 3 5 7 1" fill="none" stroke="#b5b9c4" stroke-width="1.100"/></svg>
<svg style="left:231.5px;top:487.4px" width="7" height="8" viewBox="0 0 7 8"><path d="M.5.500 6.500 4 .5 7.500Z" fill="#a7acb9"/></svg>
<div style="left:249.5px;top:488.4px;width:6px;height:6px;border-radius:50%;background:#0f2154"></div>
<div class="t" style="left:368.5px;top:487.4px;width:34px;text-align:right;font-size:8.500px;color:#2b4b8c">0:30</div>
<div class="t" style="left:218.5px;top:507.4px;width:190.5px;text-align:center;font-size:7.800px;color:#8b909c">Bound 2</div>
<div class="t" style="left:218.5px;top:520.4px;width:190.5px;text-align:center;font-size:7.800px;color:#8b909c">705.47 KiB, 00:30, MP3</div>
<div style="left:421.5px;top:388.4px;width:190.5px;height:140px;border-radius:4px;background:#f8f9fc"></div>
<div style="left:421.5px;top:388.4px;width:190.5px;height:88.5px;border-radius:4px 4px 0 0;overflow:hidden;background:linear-gradient(180deg,#2a2018 0%,#5a4a3a 20%,#7a6a56 50%,#6a5a48 80%,#4a3c30 100%)"><div style="left:0;top:0;width:190.5px;height:88.5px;"><div style="left:0px;top:16px;width:70px;height:4px;background:#140e0a;transform:rotate(-14deg);border-radius:2px"></div><div style="left:4px;top:34px;width:52px;height:5px;background:#140e0a;transform:rotate(-38deg);border-radius:2px"></div><div style="left:-6px;top:58px;width:40px;height:6px;background:#140e0a;transform:rotate(-62deg);border-radius:2px"></div><div style="left:24px;top:30px;width:36px;height:2.5px;background:#1a120c;transform:rotate(20deg)"></div><div style="left:20px;top:44px;width:30px;height:2px;background:#1a120c;transform:rotate(-8deg)"></div><div style="left:30px;top:52px;width:2px;height:24px;background:#1a120c;transform:rotate(10deg)"></div><div style="left:42px;top:60px;width:8px;height:28px;background:#0e0a08;border-radius:40%"></div></div></div>
<div style="left:425.0px;top:391.9px;width:15px;height:15px;border-radius:50%;background:rgba(235,238,245,.88);border:.6px solid rgba(255,255,255,.9)"></div>
<svg style="left:429.0px;top:396.4px" width="8" height="6" viewBox="0 0 8 6"><path d="M1 3.200 3 5 7 1" fill="none" stroke="#b5b9c4" stroke-width="1.100"/></svg>
<svg style="left:434.5px;top:487.4px" width="7" height="8" viewBox="0 0 7 8"><path d="M.5.500 6.500 4 .5 7.500Z" fill="#a7acb9"/></svg>
<div style="left:452.5px;top:488.4px;width:6px;height:6px;border-radius:50%;background:#0f2154"></div>
<div class="t" style="left:429.5px;top:507.4px;font-size:7.800px;color:#8b909c">Teach Me How</div>
<div style="left:16px;top:542.1px;width:190.5px;height:140px;border-radius:4px;background:#f8f9fc"></div>
<div style="left:16px;top:542.1px;width:190.5px;height:88.5px;border-radius:4px 4px 0 0;overflow:hidden;background:linear-gradient(90deg,#100e10 0%,#161214 35%,#2a1e14 60%,#1e160e 85%,#0e0c0c 100%)"><div style="left:0;top:0;width:190.5px;height:88.5px;"><div style="left:100px;top:0px;width:80px;height:52px;background:radial-gradient(circle at 3px 3px,#b08840 0 1.200px,transparent 1.800px) 0 0/9px 8px,radial-gradient(circle at 6px 5px,#6a4a20 0 2px,transparent 2.600px) 0 0/13px 11px;opacity:.8"></div><div style="left:112px;top:0px;width:40px;height:50px;background:linear-gradient(180deg,#3a2a1a,#1a120c);opacity:.6"></div><div style="left:52px;top:-6px;width:26px;height:22px;background:radial-gradient(ellipse at 50% 60%,#e0c4b4,#b8907a);border-radius:45%"></div><div style="left:24px;top:8px;width:96px;height:90px;background:linear-gradient(100deg,#30353c 0%,#6a727e 22%,#8e96a4 40%,#5a626e 58%,#7a828e 72%,#30353c 100%);border-radius:34% 30% 0 0"></div><div style="left:24px;top:8px;width:96px;height:90px;background:radial-gradient(circle at 2px 2px,rgba(235,240,250,.5) 0 .8px,transparent 1.200px) 0 0/4.500px 4.500px,radial-gradient(circle at 1px 3px,rgba(20,24,30,.45) 0 1px,transparent 1.400px) 2px 1px/5px 6px;border-radius:34% 30% 0 0"></div><div style="left:62px;top:10px;width:16px;height:50px;background:linear-gradient(90deg,#e9e6e4,#c9c6c4);clip-path:polygon(0 0,100% 0,70% 100%,30% 100%)"></div><div style="left:67px;top:14px;width:6px;height:44px;background:repeating-linear-gradient(180deg,#7a7e8a 0 2px,#a8acb8 2px 4px);clip-path:polygon(20% 0,80% 0,100% 85%,50% 100%,0 85%)"></div><div style="left:74px;top:30px;width:18px;height:30px;background:#c9a48e;border-radius:40%;transform:rotate(-20deg)"></div><div style="left:78px;top:36px;width:7px;height:36px;background:#1c1c20;transform:rotate(6deg)"></div><div style="left:96px;top:40px;width:62px;height:16px;background:linear-gradient(90deg,#5a626e,#8a929e 50%,#6a727e);border-radius:30% 40% 40% 30%;transform:rotate(-12deg)"></div><div style="left:96px;top:40px;width:62px;height:16px;background:radial-gradient(circle at 2px 2px,rgba(255,255,255,.55) 0 .9px,transparent 1.200px) 0 0/4.500px 4.500px;border-radius:30% 40% 40% 30%;transform:rotate(-12deg)"></div><div style="left:150px;top:40px;width:22px;height:16px;background:radial-gradient(ellipse,#d9b8a4,#b08a74);border-radius:45%"></div></div></div>
<div style="left:19.5px;top:545.6px;width:15px;height:15px;border-radius:50%;background:rgba(235,238,245,.88);border:.6px solid rgba(255,255,255,.9)"></div>
<svg style="left:23.5px;top:550.1px" width="8" height="6" viewBox="0 0 8 6"><path d="M1 3.200 3 5 7 1" fill="none" stroke="#b5b9c4" stroke-width="1.100"/></svg>
<svg style="left:29px;top:641.1px" width="7" height="8" viewBox="0 0 7 8"><path d="M.5.500 6.500 4 .5 7.500Z" fill="#a7acb9"/></svg>
<div style="left:47px;top:642.1px;width:6px;height:6px;border-radius:50%;background:#0f2154"></div>
<div class="t" style="left:166px;top:641.1px;width:34px;text-align:right;font-size:8.500px;color:#2b4b8c">0:30</div>
<div class="t" style="left:16px;top:661.1px;width:190.5px;text-align:center;font-size:7.800px;color:#8b909c">Asi Fue (En Vivo Desde Bellas Artes, México/</div>
<div class="t" style="left:16px;top:674.1px;width:190.5px;text-align:center;font-size:7.800px;color:#8b909c">705.47 KiB, 00:30, MP3</div>
<div style="left:218.5px;top:542.1px;width:190.5px;height:140px;border-radius:4px;background:#f8f9fc"></div>
<div style="left:218.5px;top:542.1px;width:190.5px;height:88.5px;border-radius:4px 4px 0 0;overflow:hidden;background:#7b4b33"><div style="left:0;top:0;width:190.5px;height:88.5px;"><div style="left:119px;top:0px;width:5px;height:4px;background:#e05a2c;border-radius:0 0 40% 40%"></div><div style="left:126px;top:0px;width:3px;height:2.5px;background:#e05a2c;"></div><div style="left:146px;top:0px;width:4px;height:2px;background:#efe6d0;"></div><div style="left:166px;top:0px;width:5px;height:3px;background:#d9a84c;"></div><div class="t" style="left:0;top:13.500px;width:190.500px;text-align:center;font-size:17.500px;color:#d39a55;transform:scaleY(1.39);transform-origin:50% 0;text-indent:5px">GREENS BEANS</div><div class="t" style="left:0;top:33.500px;width:190.500px;text-align:center;font-size:16px;color:#d39a55;transform:scaleY(1.35);transform-origin:50% 0;letter-spacing:.2px">POTATOES TOMATOES</div><div class="t b" style="left:0;top:65px;width:190.500px;text-align:center;font-size:6.500px;color:#f0a81c;letter-spacing:.2px">GIARPIETTI</div></div></div>
<div style="left:222.0px;top:545.6px;width:15px;height:15px;border-radius:50%;background:rgba(235,238,245,.88);border:.6px solid rgba(255,255,255,.9)"></div>
<svg style="left:226.0px;top:550.1px" width="8" height="6" viewBox="0 0 8 6"><path d="M1 3.200 3 5 7 1" fill="none" stroke="#b5b9c4" stroke-width="1.100"/></svg>
<svg style="left:231.5px;top:641.1px" width="7" height="8" viewBox="0 0 7 8"><path d="M.5.500 6.500 4 .5 7.500Z" fill="#a7acb9"/></svg>
<div style="left:249.5px;top:642.1px;width:6px;height:6px;border-radius:50%;background:#0f2154"></div>
<div class="t" style="left:368.5px;top:641.1px;width:34px;text-align:right;font-size:8.500px;color:#2b4b8c">0:30</div>
<div class="t" style="left:218.5px;top:661.1px;width:190.5px;text-align:center;font-size:7.800px;color:#8b909c">GREENS BEANS POTATOES</div>
<div class="t" style="left:218.5px;top:674.1px;width:190.5px;text-align:center;font-size:7.800px;color:#8b909c">707.31 KiB, 00:30, MP3</div>
<div style="left:421.5px;top:542.1px;width:190.5px;height:140px;border-radius:4px;background:#f8f9fc"></div>
<div style="left:421.5px;top:542.1px;width:190.5px;height:88.5px;border-radius:4px 4px 0 0;overflow:hidden;background:linear-gradient(150deg,#b89080 0%,#d9b4a4 25%,#c49484 45%,#e0c4b6 65%,#b88878 85%,#d4b0a0 100%)"><div style="left:0;top:0;width:190.5px;height:88.5px;filter:blur(.6px)"><div style="left:40px;top:0px;width:14px;height:42px;background:linear-gradient(180deg,#2a1218,#4a222a);"></div><div style="left:0px;top:40px;width:44px;height:40px;background:radial-gradient(ellipse,rgba(236,214,200,.85),transparent 70%);"></div><div style="left:6px;top:12px;width:34px;height:24px;background:radial-gradient(ellipse,rgba(168,96,84,.7),transparent 70%);"></div><div style="left:20px;top:56px;width:34px;height:30px;background:radial-gradient(ellipse,rgba(190,120,100,.7),transparent 70%);"></div></div></div>
<div style="left:425.0px;top:545.6px;width:15px;height:15px;border-radius:50%;background:rgba(235,238,245,.88);border:.6px solid rgba(255,255,255,.9)"></div>
<svg style="left:429.0px;top:550.1px" width="8" height="6" viewBox="0 0 8 6"><path d="M1 3.200 3 5 7 1" fill="none" stroke="#b5b9c4" stroke-width="1.100"/></svg>
<svg style="left:434.5px;top:641.1px" width="7" height="8" viewBox="0 0 7 8"><path d="M.5.500 6.500 4 .5 7.500Z" fill="#a7acb9"/></svg>
<div style="left:452.5px;top:642.1px;width:6px;height:6px;border-radius:50%;background:#0f2154"></div>
<div class="t" style="left:429.5px;top:661.1px;font-size:7.800px;color:#8b909c">Defying Gravity</div>
<div style="left:16px;top:695.8px;width:190.5px;height:140px;border-radius:4px;background:#f8f9fc"></div>
<div style="left:16px;top:695.8px;width:190.5px;height:78px;border-radius:4px 4px 0 0;overflow:hidden;background:linear-gradient(90deg,#161618 0%,#1e1e20 28%,#4a3e38 34%,#5a4a42 48%,#2a2422 52%,#121214 100%)"><div style="left:0;top:0;width:190.5px;height:78px;"><div style="left:30px;top:4px;width:5px;height:3px;background:#f2f2f4;border-radius:50%;transform:rotate(20deg)"></div><div style="left:44px;top:10px;width:4px;height:6px;background:#f2f2f4;border-radius:50%;transform:rotate(-30deg)"></div><div style="left:36px;top:22px;width:6px;height:3px;background:#f2f2f4;border-radius:50%;transform:rotate(40deg)"></div><div style="left:26px;top:46px;width:5px;height:3px;background:#f2f2f4;border-radius:50%;transform:rotate(-20deg)"></div><div style="left:50px;top:2px;width:3px;height:5px;background:#f2f2f4;border-radius:50%;transform:rotate(10deg)"></div><div style="left:96px;top:8px;width:4px;height:7px;background:#f2f2f4;border-radius:50%;transform:rotate(15deg)"></div><div style="left:100px;top:22px;width:3px;height:5px;background:#f2f2f4;border-radius:50%;transform:rotate(-25deg)"></div><div style="left:8px;top:70px;width:4px;height:3px;background:#f2f2f4;border-radius:50%;transform:rotate(0deg)"></div><div style="left:186px;top:6px;width:4px;height:5px;background:#f2f2f4;border-radius:50%;transform:rotate(30deg)"></div><div style="left:58px;top:16px;width:3px;height:4px;background:#f2f2f4;border-radius:50%;transform:rotate(0deg)"></div><div style="left:98px;top:-10px;width:100px;height:100px;background:radial-gradient(ellipse at 50% 50%,#ffffff 0%,#f2f3f6 55%,#d9dce4 100%);border-radius:42% 42% 20% 20%"></div><div style="left:100px;top:6px;width:34px;height:40px;background:radial-gradient(ellipse,#fafafc,#dcdfe6);border-radius:50%"></div><div style="left:160px;top:4px;width:34px;height:44px;background:radial-gradient(ellipse,#fafafc,#dcdfe6);border-radius:50%"></div><div style="left:130px;top:-6px;width:38px;height:24px;background:#2a1814;border-radius:20% 20% 50% 50%"></div><div style="left:138px;top:12px;width:22px;height:10px;background:#3a201a;clip-path:polygon(0 0,100% 0,50% 100%)"></div><div style="left:126px;top:22px;width:34px;height:30px;background:radial-gradient(circle at 30% 30%,#f4f4ee 0 22%,transparent 24%),radial-gradient(circle at 62% 42%,#ecece4 0 20%,transparent 22%),radial-gradient(circle at 40% 68%,#e4e6da 0 22%,transparent 24%),#8a9678;border-radius:45%"></div><div style="left:140px;top:48px;width:14px;height:26px;background:#2a2a26;border-radius:30%"></div><div style="left:146px;top:56px;width:16px;height:16px;background:#4a2a20;border-radius:45%"></div><div style="left:46px;top:36px;width:32px;height:24px;background:radial-gradient(ellipse at 50% 30%,#f0f0f2,#c9cacc);border-radius:50% 50% 40% 40%"></div><div style="left:49px;top:48px;width:27px;height:24px;background:radial-gradient(ellipse,#dcc0ae,#c09c88);border-radius:40% 40% 46% 46%"></div><div style="left:49px;top:53px;width:27px;height:6px;background:#121214;border-radius:3px"></div><div style="left:57px;top:64px;width:14px;height:5px;background:#f6f6f2;border-radius:0 0 50% 50%"></div><div style="left:26px;top:68px;width:74px;height:20px;background:linear-gradient(180deg,#ecedf0,#cfd1d6);border-radius:40% 40% 0 0"></div></div></div>
<div style="left:19.5px;top:699.3px;width:15px;height:15px;border-radius:50%;background:rgba(235,238,245,.88);border:.6px solid rgba(255,255,255,.9)"></div>
<svg style="left:23.5px;top:703.8px" width="8" height="6" viewBox="0 0 8 6"><path d="M1 3.200 3 5 7 1" fill="none" stroke="#b5b9c4" stroke-width="1.100"/></svg>
<div style="left:218.5px;top:695.8px;width:190.5px;height:140px;border-radius:4px;background:#f8f9fc"></div>
<div style="left:218.5px;top:695.8px;width:190.5px;height:78px;border-radius:4px 4px 0 0;overflow:hidden;background:#fefefe"><div style="left:0;top:0;width:190.5px;height:78px;filter:blur(.4px)"><div style="left:12px;top:14px;width:22px;height:50px;background:repeating-linear-gradient(150deg,#2ac4d8 0 2px,transparent 2px 6px);"></div><div style="left:148px;top:10px;width:22px;height:50px;background:repeating-linear-gradient(150deg,#2ac4d8 0 2px,transparent 2px 6px);opacity:.7"></div><div style="left:28px;top:0px;width:34px;height:14px;background:#e8401e;border-radius:30%;transform:rotate(-10deg)"></div><div style="left:58px;top:0px;width:38px;height:30px;background:#527a1e;border-radius:40% 30% 40% 30%;transform:rotate(14deg)"></div><div style="left:64px;top:6px;width:22px;height:16px;background:#3e6a14;border-radius:50%"></div><div style="left:86px;top:4px;width:44px;height:50px;background:#2a98d6;border-radius:30%;transform:rotate(28deg)"></div><div style="left:112px;top:-6px;width:50px;height:44px;background:#f2c022;border-radius:30% 20% 30% 20%;transform:rotate(24deg)"></div><div style="left:150px;top:0px;width:16px;height:30px;background:#62a81e;border-radius:30%;transform:rotate(18deg)"></div><div style="left:26px;top:20px;width:52px;height:48px;background:#d83ac6;border-radius:34%;transform:rotate(-24deg)"></div><div style="left:36px;top:30px;width:9px;height:9px;background:#f0a030;border-radius:50%"></div><div style="left:52px;top:24px;width:7px;height:7px;background:#f0a030;border-radius:50%"></div><div style="left:48px;top:36px;width:40px;height:42px;background:#66d62a;border-radius:30% 20% 30% 20%;transform:rotate(-30deg)"></div><div style="left:52px;top:48px;width:22px;height:20px;background:#e048c8;border-radius:40%"></div><div style="left:86px;top:28px;width:52px;height:30px;background:#f08c3a;border-radius:20%;transform:rotate(32deg)"></div><div style="left:144px;top:26px;width:24px;height:46px;background:#6ad82a;border-radius:30%;transform:rotate(14deg)"></div><div style="left:96px;top:60px;width:60px;height:22px;background:#e8421e;border-radius:30% 30% 0 0;transform:rotate(-6deg)"></div><div style="left:40px;top:66px;width:40px;height:14px;background:#b8e028;border-radius:30%"></div><div style="left:104px;top:62px;width:28px;height:18px;background:#16141a;border-radius:10%;transform:rotate(-14deg)"></div><div style="left:110px;top:66px;width:14px;height:10px;background:#d83030;transform:rotate(-14deg)"></div><div style="left:86px;top:40px;width:44px;height:2.5px;background:#16141a;transform:rotate(-28deg)"></div><div style="left:100px;top:44px;width:24px;height:2px;background:#16141a;transform:rotate(-60deg)"></div><div style="left:24px;top:14px;width:30px;height:16px;background:transparent;border-radius:40%;border:2.500px solid #16141a;transform:rotate(20deg)"></div><div style="left:42px;top:54px;width:22px;height:18px;background:transparent;border-radius:40%;border:2.500px solid #16141a"></div><div style="left:146px;top:30px;width:20px;height:22px;background:transparent;border-radius:40%;border:2px solid #1a5a3a;transform:rotate(20deg)"></div><div style="left:80px;top:2px;width:22px;height:26px;background:transparent;border-radius:30%;border:2px solid #1a4a8a;transform:rotate(40deg)"></div></div></div>
<div style="left:222.0px;top:699.3px;width:15px;height:15px;border-radius:50%;background:rgba(235,238,245,.88);border:.6px solid rgba(255,255,255,.9)"></div>
<svg style="left:226.0px;top:703.8px" width="8" height="6" viewBox="0 0 8 6"><path d="M1 3.200 3 5 7 1" fill="none" stroke="#b5b9c4" stroke-width="1.100"/></svg>
<div style="left:421.5px;top:695.8px;width:190.5px;height:140px;border-radius:4px;background:#f8f9fc"></div>
<div style="left:421.5px;top:695.8px;width:190.5px;height:78px;border-radius:4px 4px 0 0;overflow:hidden;background:linear-gradient(160deg,#2a3a78 0%,#4a5a9a 25%,#7a7ab4 50%,#9a86b8 70%,#8a78a8 100%)"><div style="left:0;top:0;width:190.5px;height:78px;filter:blur(.5px)"><div style="left:16px;top:30px;width:36px;height:30px;background:radial-gradient(ellipse,rgba(226,200,208,.8),transparent 70%);"></div><div style="left:-6px;top:56px;width:30px;height:30px;background:radial-gradient(ellipse,#e09a3a,#c07a2a 60%,transparent 75%);"></div><div style="left:0px;top:10px;width:50px;height:20px;background:radial-gradient(ellipse,rgba(90,120,190,.8),transparent 70%);"></div></div></div>
<div style="left:425.0px;top:699.3px;width:15px;height:15px;border-radius:50%;background:rgba(235,238,245,.88);border:.6px solid rgba(255,255,255,.9)"></div>
<svg style="left:429.0px;top:703.8px" width="8" height="6" viewBox="0 0 8 6"><path d="M1 3.200 3 5 7 1" fill="none" stroke="#b5b9c4" stroke-width="1.100"/></svg>
<div style="left:0;top:773.500px;width:474px;height:42px;background:#fff;border-top:1px solid #f0f1f5"></div>
<div style="left:10.500px;top:783px;width:86px;height:23px;border-radius:4px;background:#f8f9fb;border:1px solid #eef0f4"></div>
<div class="t" style="left:10.500px;top:788.500px;width:86px;text-align:center;font-size:11.800px;color:#3a3f4b">Back to video</div>
<div style="left:0;top:815px;width:474px;height:26px;background:#2b2d33"></div>
</div>
<div class="t b" style="left:1381px;top:1024px;font-size:18px;color:#fff">0:07</div>
<div style="left:1428px;top:1007px;width:50px;height:50px;border-radius:50%;background:#25282c"></div>
<svg style="left:1445px;top:1021px" width="19" height="22" viewBox="0 0 19 22"><path d="M1.500 1.800a1 1 0 0 1 1.500-.9L18 10.100a1 1 0 0 1 0 1.800L3 21.100a1 1 0 0 1-1.500-.9Z" fill="#fff"/></svg>
<div class="t" style="left:1488px;top:1024px;font-size:18px;color:#c9cbcf">0:25</div>
<!-- FLOATING TOOLBAR -->
<div style="left:877px;top:80px;width:1000px;height:50px;border-radius:12px;background:#252627;box-shadow:0 1px 5px rgba(0,0,0,.45)"></div>
<div style="left:889px;top:92.500px;width:25px;height:25px;border-radius:50%;background:linear-gradient(170deg,#2cc0d8 0%,#2aa8e0 35%,#3a82ee 70%,#3a6cf0 100%)"></div>
<div style="left:896px;top:102px;width:12px;height:12px;border-radius:50%;background:#5a3cf2"></div>
<svg style="left:889px;top:92.500px" width="25" height="25" viewBox="0 0 25 25"><path d="M14 7.500c2.500-.8 4.500 1.500 3 3.500M18.500 14.500a6.200 6.200 0 1 1-8-6.500" fill="none" stroke="#fff" stroke-width="1.700" stroke-linecap="round"/><circle cx="6.200" cy="8.500" r="1.200" fill="#dff4ff"/><circle cx="4.500" cy="12.500" r=".9" fill="#dff4ff"/><circle cx="8.800" cy="6" r=".8" fill="#dff4ff"/></svg>
<div class="t b" style="left:922px;top:97.500px;font-size:17px">Ask Canva</div>
<div style="left:1026px;top:96px;width:1.500px;height:18px;background:#46484c"></div>
<svg style="left:1044px;top:92px" width="27" height="26" viewBox="0 0 27 26"><path class="st" style="stroke-width:1.900" d="M14.500 3.200C13.800 3.100 13 3 12.200 3 6.200 3 1.500 6.900 1.500 11.800c0 2.700 1.500 5.100 3.800 6.700L4.600 23.200 9.500 20.300c.9.200 1.800.3 2.700.3 6 0 10.700-3.900 10.700-8.800 0-.5 0-.9-.1-1.300M21.500 1V8.500M17.800 4.800H25.200"/></svg>
<svg style="left:1091px;top:93px" width="21" height="24" viewBox="0 0 21 24"><path class="st" style="stroke-width:1.900" d="M1 5.500H20M6.500 5.200V3.500a2 2 0 0 1 2-2h4a2 2 0 0 1 2 2V5.200M3 5.500V20a2.500 2.500 0 0 0 2.500 2.500h10A2.500 2.500 0 0 0 18 20V5.500M8 10V17.500M13 10V17.500"/></svg>
<div style="left:1130.500px;top:96px;width:1.500px;height:18px;background:#46484c"></div>
<svg style="left:1149px;top:93px" width="25" height="24" viewBox="0 0 25 24"><path class="st" style="stroke-width:1.900" d="M22.500 11V5a3.500 3.500 0 0 0-3.500-3.500H5A3.500 3.500 0 0 0 1.500 5V18.500A3.500 3.500 0 0 0 5 22h5.500M2.500 20.500 16.500 8.500l6 5.500"/><circle class="st" style="stroke-width:1.900" cx="8" cy="7.800" r="2"/><path class="st" style="stroke-width:1.900" d="M14.500 20H23.500M17 17.200 14.200 20 17 22.800"/></svg>
<div class="t b" style="left:1181px;top:97.500px;font-size:17px">Edit</div>
<div style="left:1233px;top:96px;width:1.500px;height:18px;background:#46484c"></div>
<svg style="left:1251px;top:94px" width="24" height="23" viewBox="0 0 24 23"><path class="st" style="stroke-width:1.900" d="M8.500 4H3.500A2 2 0 0 0 1.500 6V16A2 2 0 0 0 3.500 18H8.500M11.800 1V22M15.500 4H20a2 2 0 0 1 2 2v1.500M22 14.500V16a2 2 0 0 1-2 2H15.500"/></svg>
<div style="left:1292.500px;top:96px;width:1.500px;height:18px;background:#46484c"></div>
<div class="t b" style="left:1313px;top:97.500px;font-size:17px">Magic BG</div>
<svg style="left:1404px;top:98px" width="15" height="13" viewBox="0 0 15 14"><path fill="#f0b04a" d="M1.200 3.200 4.600 6.600 7.500 1.200 10.400 6.600 13.800 3.200 12.400 10.400H2.600ZM2.800 11.400H12.200V12.900H2.800Z"/><circle cx="7.500" cy="1.400" r="1.200" fill="#f0b04a"/><circle cx="1.400" cy="3.400" r="1.100" fill="#f0b04a"/><circle cx="13.600" cy="3.400" r="1.100" fill="#f0b04a"/></svg>
<div style="left:1440.500px;top:96px;width:1.500px;height:18px;background:#46484c"></div>
<div class="t b" style="left:1461px;top:97.500px;font-size:17px">BG Remover</div>
<svg style="left:1577px;top:98px" width="15" height="13" viewBox="0 0 15 14"><path fill="#b9bbbf" d="M1.200 3.200 4.600 6.600 7.500 1.200 10.400 6.600 13.800 3.200 12.400 10.400H2.600ZM2.800 11.400H12.200V12.900H2.800Z"/><circle cx="7.500" cy="1.400" r="1.200" fill="#b9bbbf"/><circle cx="1.400" cy="3.400" r="1.100" fill="#b9bbbf"/><circle cx="13.600" cy="3.400" r="1.100" fill="#b9bbbf"/></svg>
<div class="t b" style="left:1620px;top:97.500px;font-size:17px">Eraser</div>
<div style="left:1692px;top:96px;width:1.500px;height:18px;background:#46484c"></div>
<div style="left:1707.500px;top:90px;width:30px;height:30px;border-radius:50%;background:#fff"></div>
<div style="left:1751.500px;top:96px;width:1.500px;height:18px;background:#46484c"></div>
<svg style="left:1769px;top:92px" width="26" height="26" viewBox="0 0 26 26"><path class="st" style="stroke-width:1.900" d="M6.500 1.500V17.500a1.500 1.500 0 0 0 1.500 1.500H19.500M1.500 6.500H17.500a1.500 1.500 0 0 1 1.500 1.500V24"/><circle cx="23.500" cy="19" r="1.100" fill="#fff"/></svg>
<div class="t b" style="left:1816px;top:97.500px;font-size:17px">Flip</div>
<!-- DOWNLOAD PANEL -->
<div style="left:1848px;top:70px;width:514px;height:466px;border-radius:17px;background:#252627;box-shadow:0 2px 10px rgba(0,0,0,.5)"></div>
<svg style="left:1873px;top:92px" width="9" height="14" viewBox="0 0 9 14"><path class="st" style="stroke-width:1.800;stroke:#e6e7e9" d="M7.500 1 1.500 7 7.500 13"/></svg>
<div class="t b" style="left:1896px;top:90px;font-size:18px">Download</div>
<div style="left:1851px;top:123.500px;width:508px;height:1px;background:#3a3c40"></div>
<div class="t b" style="left:1868.500px;top:153px;font-size:15px">File type</div>
<div style="left:1868.500px;top:183px;width:474px;height:49px;border-radius:9px;background:#111316;border:1px solid #383a3f"></div>
<svg style="left:1887px;top:198px" width="25" height="19" viewBox="0 0 25 19"><rect class="st" style="stroke-width:1.800" x="1" y="1" width="23" height="17" rx="2"/><path d="M10 6 15.500 9.500 10 13Z" fill="#fff"/></svg>
<div class="t" style="left:1924px;top:198px;font-size:18.500px">MP4 Video</div>
<div style="left:2032px;top:197.500px;width:86px;height:20px;border-radius:10px;background:#1a68ea"></div>
<div class="t b" style="left:2032px;top:200.500px;width:86px;text-align:center;font-size:14px">Suggested</div>
<svg style="left:2305px;top:203px" width="15" height="9" viewBox="0 0 15 9"><path class="st" style="stroke-width:2" d="M1.500 1.500 7.500 7.500 13.500 1.500"/></svg>
<div class="t" style="left:1868.500px;top:246px;font-size:18.500px;color:#f2f3f5">Quality</div>
<div style="left:1868.500px;top:291.500px;width:446px;height:4px;border-radius:2px;background:#47494e"></div>
<div style="left:1868.500px;top:291.500px;width:294px;height:4px;border-radius:2px;background:#8b3dff"></div>
<div style="left:2149px;top:281px;width:25px;height:25px;border-radius:50%;background:#fff;box-shadow:0 1px 3px rgba(0,0,0,.5)"></div>
<svg style="left:2323px;top:287px" width="15" height="13" viewBox="0 0 15 14"><path fill="#b9bbbf" d="M1.200 3.200 4.600 6.600 7.500 1.200 10.400 6.600 13.800 3.200 12.400 10.400H2.600ZM2.800 11.400H12.200V12.900H2.800Z"/><circle cx="7.500" cy="1.400" r="1.200" fill="#b9bbbf"/><circle cx="1.400" cy="3.400" r="1.100" fill="#b9bbbf"/><circle cx="13.600" cy="3.400" r="1.100" fill="#b9bbbf"/></svg>
<div class="t" style="left:1868.500px;top:323px;font-size:15.500px;color:#b4b6ba">1080p (HD)</div>
<div class="t b" style="left:1868.500px;top:356px;font-size:14px;color:#c4c6ca">For streaming</div>
<div class="t b" style="left:1868.500px;top:397px;font-size:15px">Preferences</div>
<div style="left:1873px;top:427.500px;width:20px;height:20px;border-radius:4px;background:#8b3dff"></div>
<svg style="left:1876px;top:431px" width="14" height="13" viewBox="0 0 14 13"><path class="st" style="stroke-width:2" d="M1.500 7 5 10.500 12.500 1.800"/></svg>
<div class="t" style="left:1903px;top:428px;font-size:18.500px;color:#f2f3f5">Save download settings</div>
<div style="left:1868.500px;top:467px;width:474px;height:49px;border-radius:9px;background:#8b3dff"></div>
<div class="t b" style="left:1868.500px;top:482px;width:474px;text-align:center;font-size:18px">Download</div>
<!-- TIMELINE -->
<div style="left:575px;top:1069.500px;width:1760px;height:1px;background:linear-gradient(90deg,rgba(60,64,70,0),#34383e 8%,#34383e 92%,rgba(60,64,70,0))"></div>
<div class="t" style="left:534.0px;top:1086px;width:40px;text-align:center;font-size:15px;color:#b9bcc1">0s</div>
<div class="t" style="left:830.4px;top:1086px;width:40px;text-align:center;font-size:15px;color:#b9bcc1">10s</div>
<div class="t" style="left:1126.8px;top:1086px;width:40px;text-align:center;font-size:15px;color:#b9bcc1">20s</div>
<div class="t" style="left:1423.2px;top:1086px;width:40px;text-align:center;font-size:15px;color:#b9bcc1">30s</div>
<div class="t" style="left:1719.6px;top:1086px;width:40px;text-align:center;font-size:15px;color:#b9bcc1">40s</div>
<div class="t" style="left:2016.0px;top:1086px;width:40px;text-align:center;font-size:15px;color:#b9bcc1">50s</div>
<div style="left:612.3px;top:1091.500px;width:2px;height:2px;border-radius:50%;background:#4a4e55"></div>
<div style="left:671.6px;top:1091.500px;width:2px;height:2px;border-radius:50%;background:#4a4e55"></div>
<div style="left:730.8px;top:1091.500px;width:2px;height:2px;border-radius:50%;background:#4a4e55"></div>
<div style="left:790.1px;top:1091.500px;width:2px;height:2px;border-radius:50%;background:#4a4e55"></div>
<div style="left:908.7px;top:1091.500px;width:2px;height:2px;border-radius:50%;background:#4a4e55"></div>
<div style="left:968.0px;top:1091.500px;width:2px;height:2px;border-radius:50%;background:#4a4e55"></div>
<div style="left:1027.2px;top:1091.500px;width:2px;height:2px;border-radius:50%;background:#4a4e55"></div>
<div style="left:1086.5px;top:1091.500px;width:2px;height:2px;border-radius:50%;background:#4a4e55"></div>
<div style="left:1205.1px;top:1091.500px;width:2px;height:2px;border-radius:50%;background:#4a4e55"></div>
<div style="left:1264.4px;top:1091.500px;width:2px;height:2px;border-radius:50%;background:#4a4e55"></div>
<div style="left:1323.6px;top:1091.500px;width:2px;height:2px;border-radius:50%;background:#4a4e55"></div>
<div style="left:1382.9px;top:1091.500px;width:2px;height:2px;border-radius:50%;background:#4a4e55"></div>
<div style="left:1501.5px;top:1091.500px;width:2px;height:2px;border-radius:50%;background:#4a4e55"></div>
<div style="left:1560.8px;top:1091.500px;width:2px;height:2px;border-radius:50%;background:#4a4e55"></div>
<div style="left:1620.0px;top:1091.500px;width:2px;height:2px;border-radius:50%;background:#4a4e55"></div>
<div style="left:1679.3px;top:1091.500px;width:2px;height:2px;border-radius:50%;background:#4a4e55"></div>
<div style="left:1797.9px;top:1091.500px;width:2px;height:2px;border-radius:50%;background:#4a4e55"></div>
<div style="left:1857.2px;top:1091.500px;width:2px;height:2px;border-radius:50%;background:#4a4e55"></div>
<div style="left:1916.4px;top:1091.500px;width:2px;height:2px;border-radius:50%;background:#4a4e55"></div>
<div style="left:1975.7px;top:1091.500px;width:2px;height:2px;border-radius:50%;background:#4a4e55"></div>
<div style="left:2094.3px;top:1091.500px;width:2px;height:2px;border-radius:50%;background:#4a4e55"></div>
<div style="left:2153.6px;top:1091.500px;width:2px;height:2px;border-radius:50%;background:#4a4e55"></div>
<div style="left:2212.8px;top:1091.500px;width:2px;height:2px;border-radius:50%;background:#4a4e55"></div>
<div style="left:2272.1px;top:1091.500px;width:2px;height:2px;border-radius:50%;background:#4a4e55"></div>
<!-- tracks -->
<div style="left:554px;top:1113.500px;width:1806px;height:34px;border-radius:9px;background:#1d2126"></div>
<div style="left:554px;top:1153px;width:1806px;height:79px;border-radius:9px;background:#1d2126"></div>
<div style="left:554.500px;top:1153px;width:147px;height:79px;border-radius:9px;overflow:hidden;background:#fff"><div style="left:25px;top:2px;width:12px;height:2px;background:#7aa2e8"></div><div style="left:44px;top:2.500px;width:50px;height:1px;background:repeating-linear-gradient(90deg,#c5c9d2 0 6px,transparent 6px 9px)"></div><div style="left:99px;top:1px;width:15px;height:3.500px;border-radius:1px;background:#3f7ce8"></div><div style="left:25px;top:14px;width:34px;height:2px;background:#4a5060"></div><div style="left:25px;top:17.500px;width:30px;height:2px;background:#4a5060"></div><div style="left:25px;top:21px;width:24px;height:2px;background:#3f7ce8"></div><div style="left:25px;top:26px;width:40px;height:7px;background:repeating-linear-gradient(180deg,#c9cdd6 0 1px,transparent 1px 2.400px)"></div><div style="left:25px;top:39px;width:16px;height:4px;border-radius:1px;background:#3572e0"></div><div style="left:44px;top:40px;width:12px;height:2px;background:#d9dce3"></div><div style="left:25px;top:47px;width:24px;height:1.500px;background:#c9cdd6"></div><div style="left:70px;top:12px;width:42px;height:36px;border-radius:3px;background:linear-gradient(135deg,#e6ecfa 0%,#cfd8f4 40%,#c4b8e8 70%,#dfe6f8 100%);transform:rotate(-6deg)"></div><div style="left:76px;top:18px;width:12px;height:16px;border-radius:2px;background:#7ad0d8"></div><div style="left:92px;top:16px;width:12px;height:20px;border-radius:40%;background:#e9d4c8"></div><div style="left:94px;top:14px;width:9px;height:8px;border-radius:50%;background:#3a2a2a"></div><div style="left:86px;top:30px;width:22px;height:12px;border-radius:30%;background:#9ab0e0"></div><div style="left:104px;top:26px;width:10px;height:8px;border-radius:40%;background:#d9a0c8"></div><div style="left:25px;top:58px;width:100px;height:1.500px;background:repeating-linear-gradient(90deg,#d4d7de 0 9px,transparent 9px 14px)"></div><div style="left:32px;top:66px;width:76px;height:1px;background:#9a9ea8"></div><div style="left:31px;top:69px;width:78px;height:10px;background:repeating-linear-gradient(90deg,#f0d4d0 0 8px,transparent 8px 11.300px)"></div><div style="left:33px;top:72px;width:78px;height:5px;background:repeating-linear-gradient(90deg,#b9a8a4 0 4px,transparent 4px 11.300px)"></div><div style="left:139.500px;top:0;width:1px;height:79px;background:#3a3d44"></div></div>
<div style="left:702.0px;top:1151.500px;width:149px;height:82px;border-radius:10px;background:#9a6bff"></div><div style="left:704.5px;top:1154px;width:144px;height:77px;border-radius:8px;overflow:hidden;background:#41444b"><div style="left:12px;top:2px;width:112.500px;height:73px;background:#fff"></div><div style="left:12px;top:2px;width:33.500px;height:12px;background:#f4f5f6"></div><div style="left:12px;top:14px;width:33.500px;height:58px;background:linear-gradient(180deg,#c5c7c9 0%,#8e9194 30%,#5f6366 55%,#3c3f42 80%,#2a2c2f 100%)"></div><div style="left:12px;top:29px;width:33.500px;height:40px;background:repeating-linear-gradient(176deg,rgba(255,255,255,.10) 0 1.500px,transparent 1.500px 4px)"></div><div style="left:12px;top:72px;width:112.500px;height:3px;background:#e9ebef"></div><div style="left:111px;top:72px;width:13px;height:3px;background:#3f86e8"></div><div style="left:47.7px;top:6.2px;width:17.500px;height:8.500px;border-radius:1px;background:#c8202c"></div><div style="left:67px;top:6.2px;width:17.500px;height:8.500px;border-radius:1px;background:#3a54a8"></div><div style="left:86px;top:6.2px;width:17.500px;height:8.500px;border-radius:1px;background:linear-gradient(135deg,#f4f0e8 30%,#7a4a28 50%,#f4f0e8 75%)"></div><div style="left:105px;top:6.2px;width:17.500px;height:8.500px;border-radius:1px;background:linear-gradient(90deg,#101828,#2a4a6a 60%,#0c1420)"></div><div style="left:47.7px;top:21px;width:17.500px;height:8.500px;border-radius:1px;background:linear-gradient(100deg,#141036,#6a1a3a 50%,#100c28)"></div><div style="left:67px;top:21px;width:17.500px;height:8.500px;border-radius:1px;background:linear-gradient(90deg,#222,#bdbdbd 50%,#222)"></div><div style="left:86px;top:21px;width:17.500px;height:8.500px;border-radius:1px;background:#7a4a2f"></div><div style="left:105px;top:21px;width:17.500px;height:8.500px;border-radius:1px;background:linear-gradient(90deg,#1a1214,#d9a894 50%,#1a1214)"></div><div style="left:47.7px;top:36px;width:17.500px;height:8.500px;border-radius:1px;background:#e2e3e3"></div><div style="left:67px;top:36px;width:17.500px;height:8.500px;border-radius:1px;background:linear-gradient(90deg,#f0f0f0 0%,#bfe7f2 30%,#2a2a2c 50%,#f80a0a 62%,#f80a0a 90%,#f0f0f0 90%)"></div><div style="left:86px;top:36px;width:17.500px;height:8.500px;border-radius:1px;background:linear-gradient(120deg,#3a2a1c,#7a664a 60%,#3a2a1c)"></div><div style="left:105px;top:36px;width:17.500px;height:8.500px;border-radius:1px;background:linear-gradient(120deg,#b0905a,#7a8a4a 50%,#c9a884)"></div><div style="left:47.7px;top:50.4px;width:17.500px;height:8.500px;border-radius:1px;background:linear-gradient(90deg,#121114,#9aa0a8 40%,#2a1e16)"></div><div style="left:67px;top:50.4px;width:17.500px;height:8.500px;border-radius:1px;background:#7c4a32"></div><div style="left:86px;top:50.4px;width:17.500px;height:8.500px;border-radius:1px;background:linear-gradient(120deg,#c9907a,#6a6a3a 50%,#d9b8a4)"></div><div style="left:105px;top:50.4px;width:17.500px;height:8.500px;border-radius:1px;background:linear-gradient(90deg,#f4f4f4,#9a9a9a 50%,#f0f0f0)"></div><div style="left:47.7px;top:64.6px;width:17.500px;height:8.500px;border-radius:1px;background:linear-gradient(90deg,#1e1d20,#e9eaee 50%,#1a191c)"></div><div style="left:67px;top:64.6px;width:17.500px;height:8.500px;border-radius:1px;background:linear-gradient(90deg,#d83ac4,#5ad23a 35%,#f2c81e 65%,#28b8d8)"></div><div style="left:86px;top:64.6px;width:17.500px;height:8.500px;border-radius:1px;background:linear-gradient(90deg,#3a4a8a,#b08a6a 60%,#d9a84a)"></div><div style="left:105px;top:64.6px;width:17.500px;height:8.500px;border-radius:1px;background:#0a0a0a"></div><div style="left:128px;top:-1px;width:2px;height:79px;background:#383b41"></div></div>
<div class="t b" style="left:712.500px;top:1207px;font-size:15.500px;color:#fff;text-shadow:0 0 3px rgba(0,0,0,.6)">5.0s</div>
<div style="left:852px;top:1153px;width:146px;height:79px;border-radius:9px;overflow:hidden;background:#fff"><div style="left:0;top:1.500px;width:146px;height:2px;background:repeating-linear-gradient(90deg,#c9d4ee 0 18px,transparent 18px 23px,#c9d4ee 23px 30px,transparent 30px 36.500px)"></div><div style="left:0.0px;top:6px;width:36.500px;height:60px;overflow:hidden;background:linear-gradient(180deg,#3e3024 0%,#32261c 40%,#17181b 58%,#0e0f11 100%)"><div style="left:0;top:2px;width:8px;height:28px;background:repeating-linear-gradient(90deg,#5a4834 0 1.500px,#2d241c 1.500px 2.500px)"></div><div style="left:25px;top:2px;width:12px;height:24px;background:repeating-linear-gradient(90deg,#5a4834 0 1.500px,#2e3a52 1.500px 2.500px,#6a4630 2.500px 4px)"></div><div style="left:6px;top:3px;width:19px;height:12px;border-radius:50% 50% 0 0;background:#9a948c"></div><div style="left:5px;top:7px;width:20px;height:25px;border-radius:42% 42% 45% 45%;background:radial-gradient(ellipse at 42% 50%,#c9a792 0%,#b4907c 55%,#7a6458 100%)"></div><div style="left:-2px;top:29px;width:42px;height:34px;border-radius:45% 35% 0 0;background:linear-gradient(180deg,#1d1f23,#0c0d0f)"></div><div style="left:4px;top:35px;width:28px;height:1.200px;background:#cfcfcf;opacity:.75"></div></div><div style="left:36.5px;top:6px;width:36.500px;height:60px;overflow:hidden;background:linear-gradient(180deg,#3e3024 0%,#32261c 40%,#17181b 58%,#0e0f11 100%)"><div style="left:0;top:2px;width:8px;height:28px;background:repeating-linear-gradient(90deg,#5a4834 0 1.500px,#2d241c 1.500px 2.500px)"></div><div style="left:25px;top:2px;width:12px;height:24px;background:repeating-linear-gradient(90deg,#5a4834 0 1.500px,#2e3a52 1.500px 2.500px,#6a4630 2.500px 4px)"></div><div style="left:6px;top:3px;width:19px;height:12px;border-radius:50% 50% 0 0;background:#9a948c"></div><div style="left:5px;top:7px;width:20px;height:25px;border-radius:42% 42% 45% 45%;background:radial-gradient(ellipse at 42% 50%,#c9a792 0%,#b4907c 55%,#7a6458 100%)"></div><div style="left:-2px;top:29px;width:42px;height:34px;border-radius:45% 35% 0 0;background:linear-gradient(180deg,#1d1f23,#0c0d0f)"></div><div style="left:4px;top:35px;width:28px;height:1.200px;background:#cfcfcf;opacity:.75"></div></div><div style="left:73.0px;top:6px;width:36.500px;height:60px;overflow:hidden;background:linear-gradient(180deg,#3e3024 0%,#32261c 40%,#17181b 58%,#0e0f11 100%)"><div style="left:0;top:2px;width:8px;height:28px;background:repeating-linear-gradient(90deg,#5a4834 0 1.500px,#2d241c 1.500px 2.500px)"></div><div style="left:25px;top:2px;width:12px;height:24px;background:repeating-linear-gradient(90deg,#5a4834 0 1.500px,#2e3a52 1.500px 2.500px,#6a4630 2.500px 4px)"></div><div style="left:6px;top:3px;width:19px;height:12px;border-radius:50% 50% 0 0;background:#9a948c"></div><div style="left:5px;top:7px;width:20px;height:25px;border-radius:42% 42% 45% 45%;background:radial-gradient(ellipse at 42% 50%,#c9a792 0%,#b4907c 55%,#7a6458 100%)"></div><div style="left:-2px;top:29px;width:42px;height:34px;border-radius:45% 35% 0 0;background:linear-gradient(180deg,#1d1f23,#0c0d0f)"></div><div style="left:4px;top:35px;width:28px;height:1.200px;background:#cfcfcf;opacity:.75"></div></div><div style="left:109.5px;top:6px;width:36.500px;height:60px;overflow:hidden;background:linear-gradient(180deg,#3e3024 0%,#32261c 40%,#17181b 58%,#0e0f11 100%)"><div style="left:0;top:2px;width:8px;height:28px;background:repeating-linear-gradient(90deg,#5a4834 0 1.500px,#2d241c 1.500px 2.500px)"></div><div style="left:25px;top:2px;width:12px;height:24px;background:repeating-linear-gradient(90deg,#5a4834 0 1.500px,#2e3a52 1.500px 2.500px,#6a4630 2.500px 4px)"></div><div style="left:6px;top:3px;width:19px;height:12px;border-radius:50% 50% 0 0;background:#9a948c"></div><div style="left:5px;top:7px;width:20px;height:25px;border-radius:42% 42% 45% 45%;background:radial-gradient(ellipse at 42% 50%,#c9a792 0%,#b4907c 55%,#7a6458 100%)"></div><div style="left:-2px;top:29px;width:42px;height:34px;border-radius:45% 35% 0 0;background:linear-gradient(180deg,#1d1f23,#0c0d0f)"></div><div style="left:4px;top:35px;width:28px;height:1.200px;background:#cfcfcf;opacity:.75"></div></div><div style="left:0;top:66px;width:146px;height:13px;background:#fff"></div><div style="left:1px;top:70.500px;width:146px;height:3px;background:radial-gradient(circle at 1.500px 1.500px,#2a2a2e 0 1.200px,transparent 1.500px) 0 0/36.500px 3px"></div><div style="left:8px;top:70.500px;width:138px;height:3px;background:radial-gradient(circle at 1.500px 1.500px,#b5b7bd 0 1.100px,transparent 1.400px) 0 0/7.300px 3px"></div></div>
<div style="left:999px;top:1153px;width:147px;height:79px;border-radius:9px;overflow:hidden;background:#fff"><div style="left:13.0px;top:2px;width:9px;height:1.500px;background:#777"></div><div style="left:33.0px;top:2px;width:2px;height:2px;background:#aaa"></div><div style="left:1.0px;top:6px;width:7px;height:8px;border-radius:40%;background:#cfe0b8"></div><div style="left:6.0px;top:12px;width:2.500px;height:2.500px;border-radius:50%;background:#333"></div><div style="left:10.5px;top:6px;width:8.500px;height:8.500px;border-radius:50%;background:#2f6fd0;border:1px solid #9ec0f0"></div><div style="left:13.0px;top:8.500px;width:3.500px;height:3.500px;border-radius:50%;background:#e9f0fb"></div><div style="left:0.0px;top:19px;width:36.800px;height:51.500px;overflow:hidden;background:#3a3128"><div style="left:0;top:0;width:37px;height:30px;background:repeating-linear-gradient(90deg,transparent 0 3px,rgba(20,15,10,.55) 3px 4px),repeating-linear-gradient(180deg,#3c3228 0 3px,#221a14 3px 4px)"></div><div style="left:13px;top:1px;width:19px;height:12px;border-radius:50% 50% 0 0;background:#8e8a86"></div><div style="left:13px;top:4px;width:19px;height:25px;border-radius:42% 42% 46% 46%;background:radial-gradient(ellipse at 45% 50%,#d6b39e 0%,#c39d88 55%,#8f7465 100%)"></div><div style="left:-3px;top:25px;width:44px;height:30px;border-radius:40% 45% 0 0;background:linear-gradient(170deg,#e0d8d3 0%,#d2c8c2 50%,#b8aca6 100%)"></div><div style="left:18px;top:26px;width:10px;height:7px;border-radius:0 0 50% 50%;background:#c39d88"></div><div style="left:25px;top:35px;width:4px;height:4px;border-radius:50%;background:#2a2a3a"></div></div><div style="left:49.8px;top:2px;width:9px;height:1.500px;background:#777"></div><div style="left:69.8px;top:2px;width:2px;height:2px;background:#aaa"></div><div style="left:37.8px;top:6px;width:7px;height:8px;border-radius:40%;background:#cfe0b8"></div><div style="left:42.8px;top:12px;width:2.500px;height:2.500px;border-radius:50%;background:#333"></div><div style="left:47.3px;top:6px;width:8.500px;height:8.500px;border-radius:50%;background:#2f6fd0;border:1px solid #9ec0f0"></div><div style="left:49.8px;top:8.500px;width:3.500px;height:3.500px;border-radius:50%;background:#e9f0fb"></div><div style="left:36.8px;top:19px;width:36.800px;height:51.500px;overflow:hidden;background:#3a3128"><div style="left:0;top:0;width:37px;height:30px;background:repeating-linear-gradient(90deg,transparent 0 3px,rgba(20,15,10,.55) 3px 4px),repeating-linear-gradient(180deg,#3c3228 0 3px,#221a14 3px 4px)"></div><div style="left:13px;top:1px;width:19px;height:12px;border-radius:50% 50% 0 0;background:#8e8a86"></div><div style="left:13px;top:4px;width:19px;height:25px;border-radius:42% 42% 46% 46%;background:radial-gradient(ellipse at 45% 50%,#d6b39e 0%,#c39d88 55%,#8f7465 100%)"></div><div style="left:-3px;top:25px;width:44px;height:30px;border-radius:40% 45% 0 0;background:linear-gradient(170deg,#e0d8d3 0%,#d2c8c2 50%,#b8aca6 100%)"></div><div style="left:18px;top:26px;width:10px;height:7px;border-radius:0 0 50% 50%;background:#c39d88"></div><div style="left:25px;top:35px;width:4px;height:4px;border-radius:50%;background:#2a2a3a"></div></div><div style="left:86.6px;top:2px;width:9px;height:1.500px;background:#777"></div><div style="left:106.6px;top:2px;width:2px;height:2px;background:#aaa"></div><div style="left:74.6px;top:6px;width:7px;height:8px;border-radius:40%;background:#cfe0b8"></div><div style="left:79.6px;top:12px;width:2.500px;height:2.500px;border-radius:50%;background:#333"></div><div style="left:84.1px;top:6px;width:8.500px;height:8.500px;border-radius:50%;background:#2f6fd0;border:1px solid #9ec0f0"></div><div style="left:86.6px;top:8.500px;width:3.500px;height:3.500px;border-radius:50%;background:#e9f0fb"></div><div style="left:73.6px;top:19px;width:36.800px;height:51.500px;overflow:hidden;background:#3a3128"><div style="left:0;top:0;width:37px;height:30px;background:repeating-linear-gradient(90deg,transparent 0 3px,rgba(20,15,10,.55) 3px 4px),repeating-linear-gradient(180deg,#3c3228 0 3px,#221a14 3px 4px)"></div><div style="left:13px;top:1px;width:19px;height:12px;border-radius:50% 50% 0 0;background:#8e8a86"></div><div style="left:13px;top:4px;width:19px;height:25px;border-radius:42% 42% 46% 46%;background:radial-gradient(ellipse at 45% 50%,#d6b39e 0%,#c39d88 55%,#8f7465 100%)"></div><div style="left:-3px;top:25px;width:44px;height:30px;border-radius:40% 45% 0 0;background:linear-gradient(170deg,#e0d8d3 0%,#d2c8c2 50%,#b8aca6 100%)"></div><div style="left:18px;top:26px;width:10px;height:7px;border-radius:0 0 50% 50%;background:#c39d88"></div><div style="left:25px;top:35px;width:4px;height:4px;border-radius:50%;background:#2a2a3a"></div></div><div style="left:123.39999999999999px;top:2px;width:9px;height:1.500px;background:#777"></div><div style="left:143.39999999999998px;top:2px;width:2px;height:2px;background:#aaa"></div><div style="left:111.39999999999999px;top:6px;width:7px;height:8px;border-radius:40%;background:#cfe0b8"></div><div style="left:116.39999999999999px;top:12px;width:2.500px;height:2.500px;border-radius:50%;background:#333"></div><div style="left:120.89999999999999px;top:6px;width:8.500px;height:8.500px;border-radius:50%;background:#2f6fd0;border:1px solid #9ec0f0"></div><div style="left:123.39999999999999px;top:8.500px;width:3.500px;height:3.500px;border-radius:50%;background:#e9f0fb"></div><div style="left:110.39999999999999px;top:19px;width:36.800px;height:51.500px;overflow:hidden;background:#3a3128"><div style="left:0;top:0;width:37px;height:30px;background:repeating-linear-gradient(90deg,transparent 0 3px,rgba(20,15,10,.55) 3px 4px),repeating-linear-gradient(180deg,#3c3228 0 3px,#221a14 3px 4px)"></div><div style="left:13px;top:1px;width:19px;height:12px;border-radius:50% 50% 0 0;background:#8e8a86"></div><div style="left:13px;top:4px;width:19px;height:25px;border-radius:42% 42% 46% 46%;background:radial-gradient(ellipse at 45% 50%,#d6b39e 0%,#c39d88 55%,#8f7465 100%)"></div><div style="left:-3px;top:25px;width:44px;height:30px;border-radius:40% 45% 0 0;background:linear-gradient(170deg,#e0d8d3 0%,#d2c8c2 50%,#b8aca6 100%)"></div><div style="left:18px;top:26px;width:10px;height:7px;border-radius:0 0 50% 50%;background:#c39d88"></div><div style="left:25px;top:35px;width:4px;height:4px;border-radius:50%;background:#2a2a3a"></div></div><div style="left:1px;top:73.500px;width:147px;height:3px;background:radial-gradient(circle at 1.500px 1.500px,#2a2a2e 0 1.200px,transparent 1.500px) 0 0/36.800px 3px"></div><div style="left:8px;top:73.500px;width:139px;height:3px;background:radial-gradient(circle at 1.500px 1.500px,#b5b7bd 0 1.100px,transparent 1.400px) 0 0/7.360px 3px"></div></div>
<div style="left:1148px;top:1153px;width:146.5px;height:79px;border-radius:9px;overflow:hidden;background:#41444b"><div style="left:13px;top:3px;width:112.500px;height:73px;background:#fff"></div><div style="left:13px;top:3px;width:33.500px;height:12px;background:#f4f5f6"></div><div style="left:13px;top:15px;width:33.500px;height:58px;background:linear-gradient(180deg,#c5c7c9 0%,#8e9194 30%,#5f6366 55%,#3c3f42 80%,#2a2c2f 100%)"></div><div style="left:13px;top:30px;width:33.500px;height:40px;background:repeating-linear-gradient(176deg,rgba(255,255,255,.10) 0 1.500px,transparent 1.500px 4px)"></div><div style="left:13px;top:73px;width:112.500px;height:3px;background:#e9ebef"></div><div style="left:112px;top:73px;width:13px;height:3px;background:#3f86e8"></div><div style="left:48.7px;top:7.2px;width:17.500px;height:8.500px;border-radius:1px;background:#c8202c"></div><div style="left:68px;top:7.2px;width:17.500px;height:8.500px;border-radius:1px;background:#3a54a8"></div><div style="left:87px;top:7.2px;width:17.500px;height:8.500px;border-radius:1px;background:linear-gradient(135deg,#f4f0e8 30%,#7a4a28 50%,#f4f0e8 75%)"></div><div style="left:106px;top:7.2px;width:17.500px;height:8.500px;border-radius:1px;background:linear-gradient(90deg,#101828,#2a4a6a 60%,#0c1420)"></div><div style="left:48.7px;top:22px;width:17.500px;height:8.500px;border-radius:1px;background:linear-gradient(100deg,#141036,#6a1a3a 50%,#100c28)"></div><div style="left:68px;top:22px;width:17.500px;height:8.500px;border-radius:1px;background:linear-gradient(90deg,#222,#bdbdbd 50%,#222)"></div><div style="left:87px;top:22px;width:17.500px;height:8.500px;border-radius:1px;background:#7a4a2f"></div><div style="left:106px;top:22px;width:17.500px;height:8.500px;border-radius:1px;background:linear-gradient(90deg,#1a1214,#d9a894 50%,#1a1214)"></div><div style="left:48.7px;top:37px;width:17.500px;height:8.500px;border-radius:1px;background:#e2e3e3"></div><div style="left:68px;top:37px;width:17.500px;height:8.500px;border-radius:1px;background:linear-gradient(90deg,#f0f0f0 0%,#bfe7f2 30%,#2a2a2c 50%,#f80a0a 62%,#f80a0a 90%,#f0f0f0 90%)"></div><div style="left:87px;top:37px;width:17.500px;height:8.500px;border-radius:1px;background:linear-gradient(120deg,#3a2a1c,#7a664a 60%,#3a2a1c)"></div><div style="left:106px;top:37px;width:17.500px;height:8.500px;border-radius:1px;background:linear-gradient(120deg,#b0905a,#7a8a4a 50%,#c9a884)"></div><div style="left:48.7px;top:51.4px;width:17.500px;height:8.500px;border-radius:1px;background:linear-gradient(90deg,#121114,#9aa0a8 40%,#2a1e16)"></div><div style="left:68px;top:51.4px;width:17.500px;height:8.500px;border-radius:1px;background:#7c4a32"></div><div style="left:87px;top:51.4px;width:17.500px;height:8.500px;border-radius:1px;background:linear-gradient(120deg,#c9907a,#6a6a3a 50%,#d9b8a4)"></div><div style="left:106px;top:51.4px;width:17.500px;height:8.500px;border-radius:1px;background:linear-gradient(90deg,#f4f4f4,#9a9a9a 50%,#f0f0f0)"></div><div style="left:48.7px;top:65.6px;width:17.500px;height:8.500px;border-radius:1px;background:linear-gradient(90deg,#1e1d20,#e9eaee 50%,#1a191c)"></div><div style="left:68px;top:65.6px;width:17.500px;height:8.500px;border-radius:1px;background:linear-gradient(90deg,#d83ac4,#5ad23a 35%,#f2c81e 65%,#28b8d8)"></div><div style="left:87px;top:65.6px;width:17.500px;height:8.500px;border-radius:1px;background:linear-gradient(90deg,#3a4a8a,#b08a6a 60%,#d9a84a)"></div><div style="left:106px;top:65.6px;width:17.500px;height:8.500px;border-radius:1px;background:#0a0a0a"></div><div style="left:129px;top:0px;width:2px;height:79px;background:#383b41"></div></div>
<div style="left:785.500px;top:1101px;width:2.500px;height:182px;border-radius:1px;background:#f4f5f6"></div>
<svg style="left:779px;top:1075.500px" width="15.500" height="13" viewBox="0 0 15.500 13"><path d="M3.200 0.500H12.300A2.700 2.700 0 0 1 15 3.200V5.200a3 3 0 0 1-1.100 2.300L8.900 11.900a1.800 1.800 0 0 1-2.300 0L1.600 7.500A3 3 0 0 1 .5 5.200V3.200A2.700 2.700 0 0 1 3.200.500Z" fill="#fff"/></svg>
<!-- plus -->
<div style="left:1305px;top:1168px;width:49px;height:49px;border-radius:9px;background:#33363b"></div>
<svg style="left:1320px;top:1183px" width="19" height="19" viewBox="0 0 19 19"><path class="st" style="stroke-width:1.700;stroke:#e6e7e9" d="M9.500 1V18M1 9.500H18"/></svg>
<!-- add audio -->
<div style="left:554px;top:1237px;width:120px;height:34px;border-radius:9px;background:#1d2126"></div>
<svg style="left:566px;top:1246px" width="16" height="17" viewBox="0 0 16 17"><path class="st" style="stroke-width:1.700" d="M5.500 13.500V3.500L14.500 1.500V11.500"/><circle class="st" style="stroke-width:1.700" cx="3.300" cy="13.700" r="2.200"/><circle class="st" style="stroke-width:1.700" cx="12.300" cy="11.700" r="2.200"/></svg>
<div class="t b" style="left:589px;top:1246.500px;font-size:15px">Add Audio</div>
<!-- notes -->
<svg style="left:554px;top:1299.500px" width="24" height="20" viewBox="0 0 24 20"><path class="st" style="stroke-width:1.900" d="M1 2H18M1 7.500H12M1 13H7.500M1 18.500H4.500M19 5.500a1.900 1.900 0 0 1 2.700 2.700L12.500 17.400 8.800 18.400 9.800 14.700Z"/></svg>
<div class="t b" style="left:584px;top:1300.500px;font-size:18px">Notes</div>
<!-- bottom right -->
<svg style="left:1580px;top:1297px" width="24" height="22" viewBox="0 0 24 22"><rect class="st" style="stroke-width:1.900" x="1" y="1" width="22" height="11" rx="1"/><rect x="1" y="15" width="6" height="5" fill="none" stroke="#5a5d63" stroke-width="1.500"/><rect x="9" y="15" width="6" height="5" fill="none" stroke="#5a5d63" stroke-width="1.500"/><rect x="17" y="15" width="6" height="5" fill="none" stroke="#5a5d63" stroke-width="1.500"/></svg>
<div style="left:1627px;top:1306.500px;width:246px;height:4px;border-radius:2px;background:#4a4d52"></div>
<div style="left:1627px;top:1306.500px;width:84px;height:4px;border-radius:2px;background:#6a6d72"></div>
<div style="left:1699px;top:1296px;width:25px;height:25px;border-radius:50%;background:#fff"></div>
<div class="t b" style="left:1905px;top:1300px;font-size:18.500px">35%</div>
<div style="left:1973.500px;top:1298px;width:1.500px;height:19px;background:#3a3d42"></div>
<div style="left:1986px;top:1288.500px;width:98px;height:50px;border-radius:9px;background:#2a2d32"></div>
<svg style="left:1994px;top:1297px" width="23" height="22" viewBox="0 0 23 22"><rect class="st" style="stroke-width:1.900" x="1" y="1" width="21" height="11" rx="1"/><rect class="st" style="stroke-width:1.600" x="1" y="15" width="5.700" height="5.500"/><rect class="st" style="stroke-width:1.600" x="8.700" y="15" width="5.700" height="5.500"/><rect class="st" style="stroke-width:1.600" x="16.300" y="15" width="5.700" height="5.500"/></svg>
<div class="t b" style="left:2026px;top:1300px;font-size:17px">Pages</div>
<div class="t b" style="left:2104px;top:1300px;font-size:17.500px;letter-spacing:.55px">0:07 / 0:25</div>
<svg style="left:2223px;top:1298px" width="21" height="21" viewBox="0 0 21 21"><rect class="st" style="stroke-width:1.900" x="1" y="1" width="7.500" height="7.500" rx="1"/><rect class="st" style="stroke-width:1.900" x="12.500" y="1" width="7.500" height="7.500" rx="1"/><rect class="st" style="stroke-width:1.900" x="1" y="12.500" width="7.500" height="7.500" rx="1"/><rect class="st" style="stroke-width:1.900" x="12.500" y="12.500" width="7.500" height="7.500" rx="1"/></svg>
<svg style="left:2273px;top:1298px" width="21" height="21" viewBox="0 0 21 21"><path class="st" style="stroke-width:1.900" d="M13 1.500H19.500V8M19.200 1.800 12.500 8.500M8 19.500H1.500V13M1.800 19.200 8.500 12.500"/></svg>
<svg style="left:2329px;top:1295px" width="26" height="26" viewBox="0 0 26 26"><circle class="st" style="stroke-width:1.900" cx="13" cy="13" r="11.500"/><path class="st" style="stroke-width:2" d="M9.800 10.200a3.300 3.300 0 1 1 4.800 3c-1 .6-1.500 1.200-1.500 2.300"/><circle cx="13.100" cy="18.800" r="1.300" fill="#fff"/></svg>
</div>
</body>
</html>
